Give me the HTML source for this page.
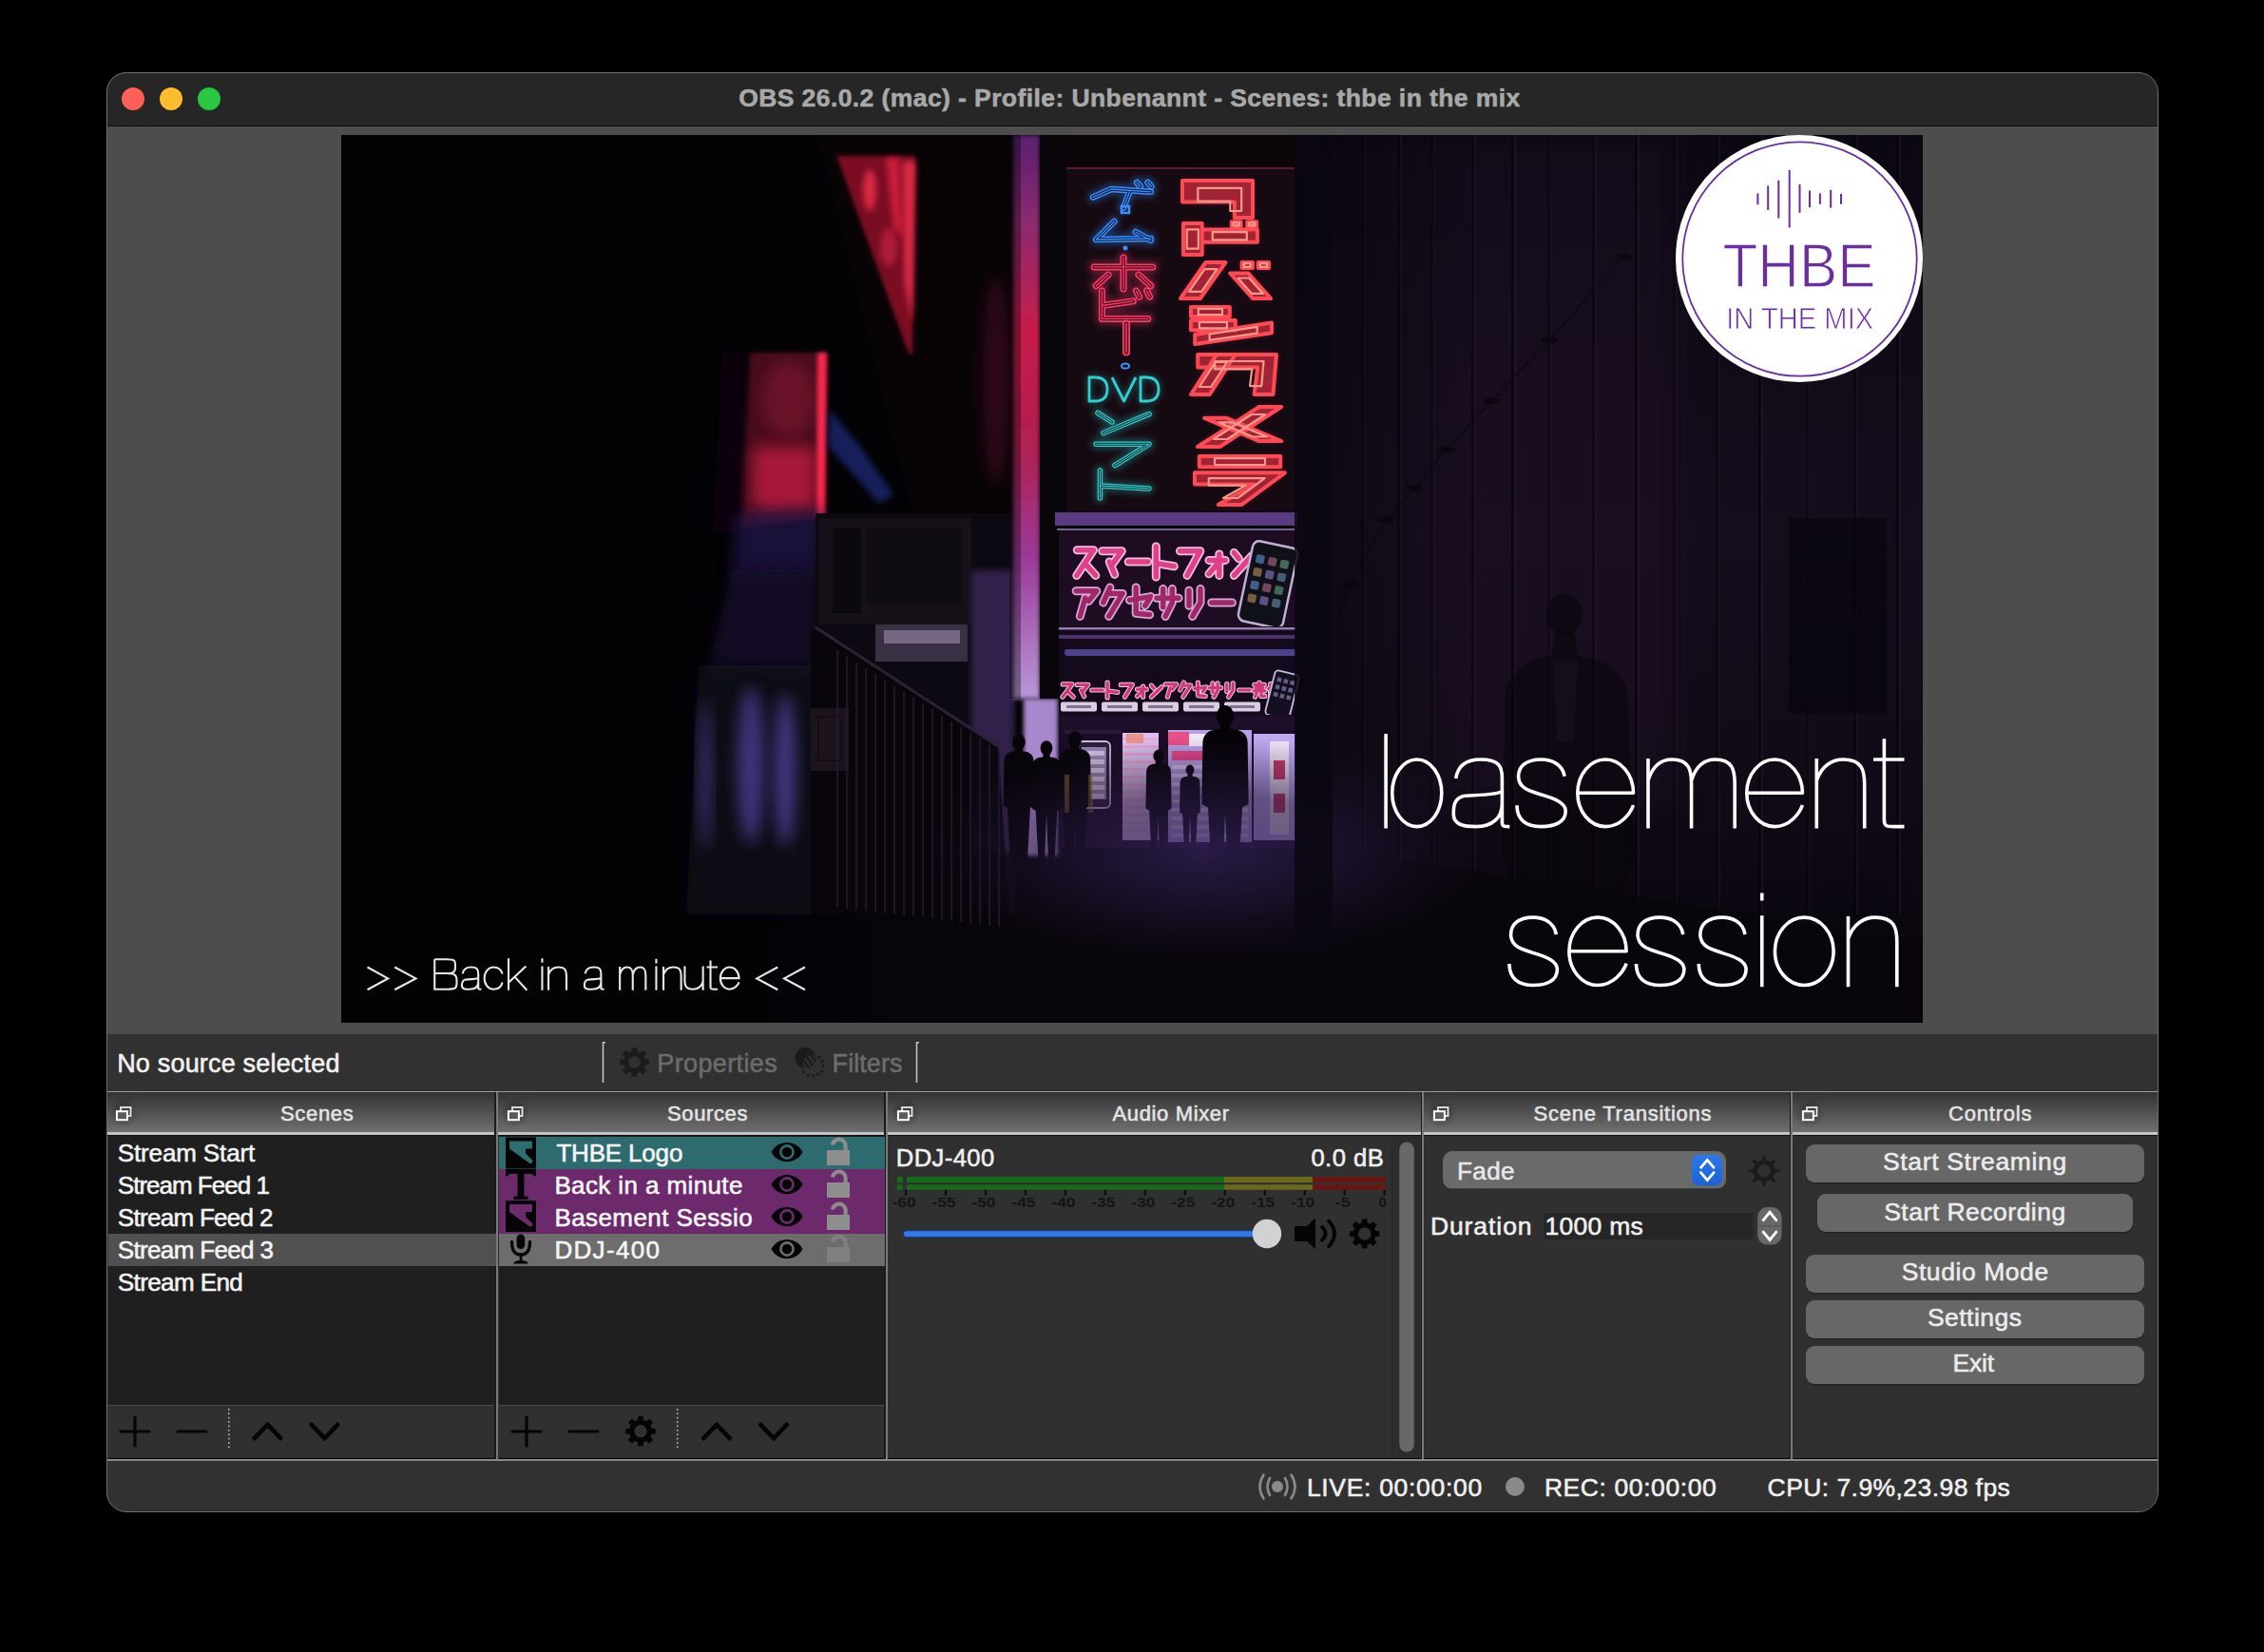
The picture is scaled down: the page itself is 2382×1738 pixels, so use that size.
<!DOCTYPE html><html><head><meta charset="utf-8"><style>
html,body{margin:0;padding:0;background:#000;}
body{width:2382px;height:1738px;overflow:hidden;position:relative;font-family:"Liberation Sans", sans-serif;}
.t{-webkit-text-stroke:0.55px currentColor;z-index:5;}
#win{position:absolute;left:0;top:0;width:2382px;height:1738px;clip-path:inset(76px 112px 148px 112px round 20px);}
</style></head><body><div id="win">
<div style="position:absolute;left:112px;top:76px;width:2158px;height:56px;background:#262626;"></div>
<div style="position:absolute;left:112px;top:132px;width:2158px;height:1px;background:#0c0c0c;"></div>
<div style="position:absolute;left:112px;top:133px;width:2158px;height:955px;background:#4d4d4d;"></div>
<svg style="position:absolute;left:359px;top:142px" width="1664" height="934" viewBox="359 142 1664 934">
<defs>
<filter id="blur2" x="-50%" y="-50%" width="200%" height="200%"><feGaussianBlur stdDeviation="2"/></filter>
<filter id="blur3" x="-50%" y="-50%" width="200%" height="200%"><feGaussianBlur stdDeviation="3"/></filter>
<filter id="blur8" x="-50%" y="-50%" width="200%" height="200%"><feGaussianBlur stdDeviation="8"/></filter>
<filter id="blur20" x="-50%" y="-50%" width="200%" height="200%"><feGaussianBlur stdDeviation="20"/></filter>
<linearGradient id="gRight" x1="0" y1="0" x2="0" y2="1"><stop offset="0" stop-color="#0c0812"/><stop offset="0.45" stop-color="#150d1c"/><stop offset="0.75" stop-color="#100a16"/><stop offset="1" stop-color="#060409"/></linearGradient>
<linearGradient id="gRightH" x1="0" y1="0" x2="1" y2="0"><stop offset="0" stop-color="#000" stop-opacity="0.5"/><stop offset="0.3" stop-color="#000" stop-opacity="0"/><stop offset="1" stop-color="#000" stop-opacity="0"/></linearGradient>
<linearGradient id="gPole" x1="0" y1="0" x2="0" y2="1"><stop offset="0" stop-color="#5a2070"/><stop offset="0.15" stop-color="#8a2a70"/><stop offset="0.35" stop-color="#c81e4a"/><stop offset="0.55" stop-color="#b02050"/><stop offset="0.75" stop-color="#9a3a98"/><stop offset="1" stop-color="#b898d8"/></linearGradient>
<linearGradient id="gRed1" x1="0" y1="0" x2="1" y2="0"><stop offset="0" stop-color="#300810"/><stop offset="0.5" stop-color="#901830"/><stop offset="1" stop-color="#e02848"/></linearGradient>
<linearGradient id="gRed2" x1="0" y1="0" x2="0" y2="1"><stop offset="0" stop-color="#c01c38"/><stop offset="0.45" stop-color="#901838"/><stop offset="0.7" stop-color="#402060"/><stop offset="1" stop-color="#100818"/></linearGradient>
<linearGradient id="gFloor" x1="0" y1="0" x2="0" y2="1"><stop offset="0" stop-color="#2a1a3a"/><stop offset="0.3" stop-color="#140c1a"/><stop offset="1" stop-color="#06040a"/></linearGradient>
<linearGradient id="gPillar" x1="0" y1="0" x2="0" y2="1"><stop offset="0" stop-color="#1a1030"/><stop offset="0.5" stop-color="#4838a0"/><stop offset="0.85" stop-color="#2a2060"/><stop offset="1" stop-color="#0a0814"/></linearGradient>
</defs>
<rect x="359" y="142" width="1664" height="934" fill="#030205"/>
<rect x="1360" y="142" width="663" height="934" fill="url(#gRight)"/>
<rect x="1360" y="142" width="400" height="700" fill="#2a1630" opacity="0.25" filter="url(#blur20)"/>
<rect x="1395" y="142" width="2.5" height="820" fill="#06040a" opacity="0.35"/>
<rect x="1398" y="142" width="2" height="820" fill="#2a1a34" opacity="0.21"/>
<rect x="1432" y="142" width="2.5" height="820" fill="#06040a" opacity="0.55"/>
<rect x="1435" y="142" width="2" height="820" fill="#2a1a34" opacity="0.33"/>
<rect x="1470" y="142" width="2.5" height="820" fill="#06040a" opacity="0.75"/>
<rect x="1473" y="142" width="2" height="820" fill="#2a1a34" opacity="0.45"/>
<rect x="1505" y="142" width="2.5" height="820" fill="#06040a" opacity="0.35"/>
<rect x="1508" y="142" width="2" height="820" fill="#2a1a34" opacity="0.21"/>
<rect x="1548" y="142" width="2.5" height="820" fill="#06040a" opacity="0.55"/>
<rect x="1551" y="142" width="2" height="820" fill="#2a1a34" opacity="0.33"/>
<rect x="1590" y="142" width="2.5" height="820" fill="#06040a" opacity="0.75"/>
<rect x="1593" y="142" width="2" height="820" fill="#2a1a34" opacity="0.45"/>
<rect x="1628" y="142" width="2.5" height="820" fill="#06040a" opacity="0.35"/>
<rect x="1631" y="142" width="2" height="820" fill="#2a1a34" opacity="0.21"/>
<rect x="1675" y="142" width="2.5" height="820" fill="#06040a" opacity="0.55"/>
<rect x="1678" y="142" width="2" height="820" fill="#2a1a34" opacity="0.33"/>
<rect x="1720" y="142" width="2.5" height="820" fill="#06040a" opacity="0.75"/>
<rect x="1723" y="142" width="2" height="820" fill="#2a1a34" opacity="0.45"/>
<rect x="1760" y="142" width="2.5" height="820" fill="#06040a" opacity="0.35"/>
<rect x="1763" y="142" width="2" height="820" fill="#2a1a34" opacity="0.21"/>
<rect x="1805" y="142" width="2.5" height="820" fill="#06040a" opacity="0.55"/>
<rect x="1808" y="142" width="2" height="820" fill="#2a1a34" opacity="0.33"/>
<rect x="1850" y="142" width="2.5" height="820" fill="#06040a" opacity="0.75"/>
<rect x="1853" y="142" width="2" height="820" fill="#2a1a34" opacity="0.45"/>
<rect x="1900" y="142" width="2.5" height="820" fill="#06040a" opacity="0.35"/>
<rect x="1903" y="142" width="2" height="820" fill="#2a1a34" opacity="0.21"/>
<rect x="1950" y="142" width="2.5" height="820" fill="#06040a" opacity="0.55"/>
<rect x="1953" y="142" width="2" height="820" fill="#2a1a34" opacity="0.33"/>
<rect x="1995" y="142" width="2.5" height="820" fill="#06040a" opacity="0.75"/>
<rect x="1998" y="142" width="2" height="820" fill="#2a1a34" opacity="0.45"/>
<rect x="1360" y="142" width="663" height="934" fill="url(#gRightH)"/>
<rect x="1364" y="320" width="14" height="260" fill="#801830" opacity="0.35" filter="url(#blur8)"/>
<polyline points="1405,660 1421,615 1458,547 1488,513 1522,473 1569,422 1630,358 1708,270" fill="none" stroke="#07040a" stroke-width="1.3" opacity="0.5"/>
<ellipse cx="1421" cy="615" rx="9" ry="3.5" fill="#050308" opacity="0.55"/>
<ellipse cx="1458" cy="547" rx="9" ry="3.5" fill="#050308" opacity="0.55"/>
<ellipse cx="1488" cy="513" rx="9" ry="3.5" fill="#050308" opacity="0.55"/>
<ellipse cx="1522" cy="473" rx="9" ry="3.5" fill="#050308" opacity="0.55"/>
<ellipse cx="1569" cy="422" rx="9" ry="3.5" fill="#050308" opacity="0.55"/>
<ellipse cx="1630" cy="358" rx="9" ry="3.5" fill="#050308" opacity="0.55"/>
<ellipse cx="1708" cy="270" rx="9" ry="3.5" fill="#050308" opacity="0.55"/>
<rect x="1882" y="545" width="103" height="205" fill="#05030a" opacity="0.6"/>
<ellipse cx="1646" cy="646" rx="19" ry="22" fill="#050308" opacity="0.5"/>
<path d="M1636,664 L1656,664 L1660,690 Q1700,695 1712,725 L1720,900 L1700,960 L1600,960 L1580,900 L1584,725 Q1596,695 1632,690 Z" fill="#050308" opacity="0.5"/>
<path d="M1634,695 L1660,695 L1656,780 L1638,780 Z" fill="#1e1424" opacity="0.45"/>
<defs><linearGradient id="gFloorH" x1="0" y1="0" x2="1" y2="0"><stop offset="0" stop-color="#08050b" stop-opacity="0"/><stop offset="0.12" stop-color="#08050b" stop-opacity="0.9"/><stop offset="1" stop-color="#08050b" stop-opacity="0.9"/></linearGradient></defs>
<path d="M800,905 L1380,890 L2023,990 L2023,1076 L800,1076 Z" fill="url(#gFloorH)"/>
<path d="M860,142 L1062,142 L1062,540 L960,540 Z" fill="#080406"/>
<path d="M880,164 L963,164 L960,372 L956,372 Z" fill="#7a1024" filter="url(#blur2)"/>
<ellipse cx="915" cy="200" rx="7" ry="22" fill="#f03050" opacity="0.8" filter="url(#blur3)"/>
<ellipse cx="935" cy="260" rx="9" ry="20" fill="#d02848" opacity="0.6" filter="url(#blur3)"/>
<path d="M932,166 L946,166 L950,250 L940,240 Z" fill="#e02040" opacity="0.8" filter="url(#blur3)"/>
<path d="M950,170 L963,170 L960,340 L952,300 Z" fill="#f03050" opacity="0.85" filter="url(#blur3)"/>
<path d="M788,371 L870,371 L868,545 L775,555 L780,470 Z" fill="#4a0a1c" filter="url(#blur2)"/>
<path d="M760,371 L788,371 L780,560 L750,560 Z" fill="#0c0307" filter="url(#blur3)"/>
<rect x="792" y="470" width="66" height="68" rx="8" fill="#d01c44" opacity="0.7" filter="url(#blur8)"/>
<ellipse cx="830" cy="420" rx="28" ry="40" fill="#801430" opacity="0.6" filter="url(#blur8)"/>
<path d="M860,371 L870,371 L868,540 L859,545 Z" fill="#ff2a50" opacity="0.95" filter="url(#blur2)"/>
<path d="M775,540 L866,535 L862,605 L770,610 Z" fill="#24124a" opacity="0.75" filter="url(#blur8)"/>
<path d="M770,600 L862,598 L860,720 L740,725 Z" fill="#180c2a" opacity="0.85" filter="url(#blur8)"/>
<path d="M735,700 L860,700 L858,962 L722,962 Z" fill="#0e0918" filter="url(#blur8)"/>
<ellipse cx="742" cy="815" rx="6" ry="78" fill="#5040a0" opacity="0.7" filter="url(#blur8)"/>
<ellipse cx="790" cy="805" rx="14" ry="82" fill="#5444a8" opacity="0.7" filter="url(#blur8)"/>
<ellipse cx="826" cy="810" rx="11" ry="80" fill="#5c4cb4" opacity="0.7" filter="url(#blur8)"/>
<rect x="858" y="540" width="210" height="422" fill="#0d0912"/>
<rect x="862" y="545" width="160" height="112" fill="#161019"/>
<rect x="876" y="555" width="30" height="90" fill="#0c0810"/>
<rect x="912" y="555" width="100" height="80" fill="#100c14"/>
<rect x="921" y="657" width="97" height="39" fill="#3a3044"/>
<rect x="930" y="663" width="80" height="14" fill="#a898b8" opacity="0.55"/>
<rect x="1022" y="600" width="45" height="297" fill="#3a2658" opacity="0.8" filter="url(#blur3)"/>
<rect x="853" y="745" width="40" height="66" fill="#d898c0"/>
<rect x="861" y="754" width="24" height="46" fill="none" stroke="#c03860" stroke-width="2"/>
<path d="M853,660 L1050,785 L1062,962 L853,962 Z" fill="#08060b" opacity="0.9"/>
<rect x="880" y="684" width="2.2" height="270" fill="#221a2c" opacity="0.8"/>
<rect x="890" y="691" width="2.2" height="265" fill="#221a2c" opacity="0.8"/>
<rect x="900" y="697" width="2.2" height="260" fill="#221a2c" opacity="0.8"/>
<rect x="910" y="703" width="2.2" height="255" fill="#221a2c" opacity="0.8"/>
<rect x="920" y="709" width="2.2" height="250" fill="#221a2c" opacity="0.8"/>
<rect x="930" y="715" width="2.2" height="245" fill="#221a2c" opacity="0.8"/>
<rect x="940" y="722" width="2.2" height="240" fill="#221a2c" opacity="0.8"/>
<rect x="950" y="728" width="2.2" height="235" fill="#221a2c" opacity="0.8"/>
<rect x="960" y="734" width="2.2" height="230" fill="#221a2c" opacity="0.8"/>
<rect x="970" y="740" width="2.2" height="225" fill="#221a2c" opacity="0.8"/>
<rect x="980" y="746" width="2.2" height="220" fill="#221a2c" opacity="0.8"/>
<rect x="990" y="753" width="2.2" height="215" fill="#221a2c" opacity="0.8"/>
<rect x="1000" y="759" width="2.2" height="210" fill="#221a2c" opacity="0.8"/>
<rect x="1010" y="765" width="2.2" height="205" fill="#221a2c" opacity="0.8"/>
<rect x="1020" y="771" width="2.2" height="200" fill="#221a2c" opacity="0.8"/>
<rect x="1030" y="777" width="2.2" height="195" fill="#221a2c" opacity="0.8"/>
<rect x="1040" y="784" width="2.2" height="190" fill="#221a2c" opacity="0.8"/>
<rect x="1050" y="790" width="2.2" height="185" fill="#221a2c" opacity="0.8"/>
<path d="M858,660 L1050,785" stroke="#2a2236" stroke-width="3" fill="none"/>
<path d="M872,430 L905,470 L940,520 L925,530 L872,470 Z" fill="#2838a0" opacity="0.55" filter="url(#blur3)"/>
<ellipse cx="1048" cy="400" rx="14" ry="110" fill="#601030" opacity="0.45" filter="url(#blur8)"/>
<rect x="1066" y="142" width="28" height="593" fill="url(#gPole)" filter="url(#blur2)"/>
<rect x="1062" y="142" width="12" height="593" fill="#000" opacity="0.35"/>
<rect x="1077" y="735" width="36" height="165" fill="#a888cc" filter="url(#blur2)"/>
<rect x="1094" y="142" width="26" height="593" fill="#07040a"/>
<rect x="1120" y="142" width="245" height="400" fill="#0c0508"/>
<rect x="1122" y="176" width="240" height="362" fill="#160a12"/>
<rect x="1122" y="176" width="240" height="2" fill="#5a1a30"/>
<path d="M1244.0,190.0 L1318.0,190.0 L1318.0,229.0 L1298.8,229.0 L1298.8,212.6 L1244.0,212.6 Z" fill="#ff4a55" opacity="0.35" filter="url(#blur3)"/><path d="M1244.0,190.0 L1318.0,190.0 L1318.0,229.0 L1298.8,229.0 L1298.8,212.6 L1244.0,212.6 Z" fill="#a02434" stroke="#ff4a55" stroke-width="4" stroke-linejoin="round"/><path d="M1260.3,197.8 L1306.2,197.8 L1306.2,222.0 L1294.3,222.0 L1294.3,211.8 L1260.3,211.8 Z" fill="none" stroke="#ffa090" stroke-width="2.2" stroke-linejoin="round" opacity="0.95"/>
<path d="M1245.0,235.0 L1264.7,235.0 L1264.7,268.0 L1245.0,268.0 Z M1264.7,241.6 L1322.9,241.6 L1322.9,254.8 L1264.7,254.8 Z M1295.8,233.3 L1305.7,233.3 L1305.7,238.3 L1295.8,238.3 Z M1312.2,233.3 L1322.1,233.3 L1322.1,238.3 L1312.2,238.3 Z" fill="#ff4a55" opacity="0.35" filter="url(#blur3)"/><path d="M1245.0,235.0 L1264.7,235.0 L1264.7,268.0 L1245.0,268.0 Z M1264.7,241.6 L1322.9,241.6 L1322.9,254.8 L1264.7,254.8 Z M1295.8,233.3 L1305.7,233.3 L1305.7,238.3 L1295.8,238.3 Z M1312.2,233.3 L1322.1,233.3 L1322.1,238.3 L1312.2,238.3 Z" fill="#a02434" stroke="#ff4a55" stroke-width="4" stroke-linejoin="round"/><path d="M1248.7,241.3 L1260.9,241.3 L1260.9,261.7 L1248.7,261.7 Z M1275.7,244.1 L1311.8,244.1 L1311.8,252.3 L1275.7,252.3 Z M1297.7,234.3 L1303.8,234.3 L1303.8,237.4 L1297.7,237.4 Z M1314.1,234.3 L1320.2,234.3 L1320.2,237.4 L1314.1,237.4 Z" fill="none" stroke="#ffa090" stroke-width="2.2" stroke-linejoin="round" opacity="0.95"/>
<path d="M1268.6,276.0 L1289.5,276.0 L1262.9,314.0 L1242.0,314.0 Z M1294.2,287.4 L1313.2,287.4 L1337.0,314.0 L1318.0,314.0 Z M1306.6,276.0 L1318.0,276.0 L1318.0,282.1 L1306.6,282.1 Z M1323.7,276.0 L1335.1,276.0 L1335.1,282.1 L1323.7,282.1 Z" fill="#ff4a55" opacity="0.35" filter="url(#blur3)"/><path d="M1268.6,276.0 L1289.5,276.0 L1262.9,314.0 L1242.0,314.0 Z M1294.2,287.4 L1313.2,287.4 L1337.0,314.0 L1318.0,314.0 Z M1306.6,276.0 L1318.0,276.0 L1318.0,282.1 L1306.6,282.1 Z M1323.7,276.0 L1335.1,276.0 L1335.1,282.1 L1323.7,282.1 Z" fill="#a02434" stroke="#ff4a55" stroke-width="4" stroke-linejoin="round"/><path d="M1267.5,283.2 L1280.5,283.2 L1264.0,306.8 L1251.0,306.8 Z M1302.4,292.5 L1314.2,292.5 L1328.9,308.9 L1317.1,308.9 Z M1308.8,277.2 L1315.8,277.2 L1315.8,280.9 L1308.8,280.9 Z M1325.9,277.2 L1332.9,277.2 L1332.9,280.9 L1325.9,280.9 Z" fill="none" stroke="#ffa090" stroke-width="2.2" stroke-linejoin="round" opacity="0.95"/>
<path d="M1253.0,323.0 L1293.8,323.0 L1293.8,333.1 L1253.0,333.1 Z M1253.0,337.0 L1299.8,337.0 L1299.8,347.2 L1253.0,347.2 Z M1257.2,351.9 L1338.0,339.4 L1338.0,350.3 L1257.2,362.0 Z" fill="#ff4a55" opacity="0.35" filter="url(#blur3)"/><path d="M1253.0,323.0 L1293.8,323.0 L1293.8,333.1 L1253.0,333.1 Z M1253.0,337.0 L1299.8,337.0 L1299.8,347.2 L1253.0,347.2 Z M1257.2,351.9 L1338.0,339.4 L1338.0,350.3 L1257.2,362.0 Z" fill="#a02434" stroke="#ff4a55" stroke-width="4" stroke-linejoin="round"/><path d="M1260.8,324.9 L1286.0,324.9 L1286.0,331.2 L1260.8,331.2 Z M1261.9,339.0 L1290.9,339.0 L1290.9,345.3 L1261.9,345.3 Z M1272.6,351.5 L1322.7,343.8 L1322.7,350.5 L1272.6,357.8 Z" fill="none" stroke="#ffa090" stroke-width="2.2" stroke-linejoin="round" opacity="0.95"/>
<path d="M1260.2,373.0 L1343.0,373.0 L1339.4,415.0 L1319.6,415.0 L1323.2,386.4 L1260.2,386.4 Z M1280.0,373.0 L1299.8,373.0 L1272.8,415.0 L1253.0,415.0 Z" fill="#ff4a55" opacity="0.35" filter="url(#blur3)"/><path d="M1260.2,373.0 L1343.0,373.0 L1339.4,415.0 L1319.6,415.0 L1323.2,386.4 L1260.2,386.4 Z M1280.0,373.0 L1299.8,373.0 L1272.8,415.0 L1253.0,415.0 Z" fill="#a02434" stroke="#ff4a55" stroke-width="4" stroke-linejoin="round"/><path d="M1278.2,380.0 L1329.5,380.0 L1327.3,406.1 L1315.0,406.1 L1317.3,388.4 L1278.2,388.4 Z M1278.6,381.0 L1290.9,381.0 L1274.2,407.0 L1261.9,407.0 Z" fill="none" stroke="#ffa090" stroke-width="2.2" stroke-linejoin="round" opacity="0.95"/>
<path d="M1324.8,428.0 L1348.2,428.0 L1283.4,470.0 L1260.0,470.0 Z M1267.2,439.8 L1290.6,439.8 L1348.2,464.1 L1324.8,464.1 Z" fill="#ff4a55" opacity="0.35" filter="url(#blur3)"/><path d="M1324.8,428.0 L1348.2,428.0 L1283.4,470.0 L1260.0,470.0 Z M1267.2,439.8 L1290.6,439.8 L1348.2,464.1 L1324.8,464.1 Z" fill="#a02434" stroke="#ff4a55" stroke-width="4" stroke-linejoin="round"/><path d="M1316.9,436.0 L1331.4,436.0 L1291.3,462.0 L1276.8,462.0 Z M1282.6,444.4 L1297.1,444.4 L1332.8,459.5 L1318.3,459.5 Z" fill="none" stroke="#ffa090" stroke-width="2.2" stroke-linejoin="round" opacity="0.95"/>
<path d="M1261.8,480.0 L1347.2,480.0 L1347.2,491.2 L1261.8,491.2 Z M1257.0,497.3 L1352.0,497.3 L1306.4,531.0 L1281.7,531.0 L1319.7,509.6 L1257.0,509.6 Z" fill="#ff4a55" opacity="0.35" filter="url(#blur3)"/><path d="M1261.8,480.0 L1347.2,480.0 L1347.2,491.2 L1261.8,491.2 Z M1257.0,497.3 L1352.0,497.3 L1306.4,531.0 L1281.7,531.0 L1319.7,509.6 L1257.0,509.6 Z" fill="#a02434" stroke="#ff4a55" stroke-width="4" stroke-linejoin="round"/><path d="M1278.0,482.1 L1331.0,482.1 L1331.0,489.1 L1278.0,489.1 Z M1271.7,503.2 L1330.6,503.2 L1302.3,524.0 L1287.0,524.0 L1310.6,510.7 L1271.7,510.7 Z" fill="none" stroke="#ffa090" stroke-width="2.2" stroke-linejoin="round" opacity="0.95"/>
<path d="M1150.0,207.4 L1169.2,199.0 L1210.8,201.8 M1188.4,201.8 L1182.0,218.6 M1196.1,192.0 L1199.9,196.2 M1207.6,192.0 L1211.4,196.2" fill="none" stroke="#3890ff" stroke-width="13.0" stroke-linecap="round" stroke-linejoin="round" opacity="0.3" filter="url(#blur3)"/><path d="M1150.0,207.4 L1169.2,199.0 L1210.8,201.8 M1188.4,201.8 L1182.0,218.6 M1196.1,192.0 L1199.9,196.2 M1207.6,192.0 L1211.4,196.2" fill="none" stroke="#3890ff" stroke-width="6.5" stroke-linecap="round" stroke-linejoin="round" /><path d="M1150.0,207.4 L1169.2,199.0 L1210.8,201.8 M1188.4,201.8 L1182.0,218.6 M1196.1,192.0 L1199.9,196.2 M1207.6,192.0 L1211.4,196.2" fill="none" stroke="#0a1a40" stroke-width="3.575" stroke-linecap="round" stroke-linejoin="round" /><path d="M1150.0,207.4 L1169.2,199.0 L1210.8,201.8 M1188.4,201.8 L1182.0,218.6 M1196.1,192.0 L1199.9,196.2 M1207.6,192.0 L1211.4,196.2" fill="none" stroke="#3890ff" stroke-width="1.3" stroke-linecap="round" stroke-linejoin="round" />
<rect x="1180" y="217" width="8" height="7" fill="none" stroke="#3890ff" stroke-width="2.5"/>
<path d="M1172.4,233.0 L1153.2,252.0 L1210.8,251.0 M1194.8,244.0 L1210.8,253.0" fill="none" stroke="#3890ff" stroke-width="13.0" stroke-linecap="round" stroke-linejoin="round" opacity="0.3" filter="url(#blur3)"/><path d="M1172.4,233.0 L1153.2,252.0 L1210.8,251.0 M1194.8,244.0 L1210.8,253.0" fill="none" stroke="#3890ff" stroke-width="6.5" stroke-linecap="round" stroke-linejoin="round" /><path d="M1172.4,233.0 L1153.2,252.0 L1210.8,251.0 M1194.8,244.0 L1210.8,253.0" fill="none" stroke="#0a1a40" stroke-width="3.575" stroke-linecap="round" stroke-linejoin="round" /><path d="M1172.4,233.0 L1153.2,252.0 L1210.8,251.0 M1194.8,244.0 L1210.8,253.0" fill="none" stroke="#3890ff" stroke-width="1.3" stroke-linecap="round" stroke-linejoin="round" />
<circle cx="1184" cy="261" r="2.5" fill="#3890ff"/>
<path d="M1151.3,280.9 L1212.7,280.9 M1182.0,271.0 L1182.0,304.0 M1166.0,289.1 L1153.2,300.7 M1198.0,289.1 L1210.8,300.7" fill="none" stroke="#ff3a6a" stroke-width="14.0" stroke-linecap="round" stroke-linejoin="round" opacity="0.3" filter="url(#blur3)"/><path d="M1151.3,280.9 L1212.7,280.9 M1182.0,271.0 L1182.0,304.0 M1166.0,289.1 L1153.2,300.7 M1198.0,289.1 L1210.8,300.7" fill="none" stroke="#ff3a6a" stroke-width="7" stroke-linecap="round" stroke-linejoin="round" /><path d="M1151.3,280.9 L1212.7,280.9 M1182.0,271.0 L1182.0,304.0 M1166.0,289.1 L1153.2,300.7 M1198.0,289.1 L1210.8,300.7" fill="none" stroke="#400a18" stroke-width="3.8500000000000005" stroke-linecap="round" stroke-linejoin="round" /><path d="M1151.3,280.9 L1212.7,280.9 M1182.0,271.0 L1182.0,304.0 M1166.0,289.1 L1153.2,300.7 M1198.0,289.1 L1210.8,300.7" fill="none" stroke="#ff3a6a" stroke-width="1.4000000000000001" stroke-linecap="round" stroke-linejoin="round" />
<path d="M1159.4,306.0 L1159.4,335.4 L1207.8,335.4 M1159.4,321.5 L1192.3,316.9 M1195.4,306.0 L1198.5,312.2 M1206.6,306.0 L1209.7,312.2" fill="none" stroke="#ff3a6a" stroke-width="14.0" stroke-linecap="round" stroke-linejoin="round" opacity="0.3" filter="url(#blur3)"/><path d="M1159.4,306.0 L1159.4,335.4 L1207.8,335.4 M1159.4,321.5 L1192.3,316.9 M1195.4,306.0 L1198.5,312.2 M1206.6,306.0 L1209.7,312.2" fill="none" stroke="#ff3a6a" stroke-width="7" stroke-linecap="round" stroke-linejoin="round" /><path d="M1159.4,306.0 L1159.4,335.4 L1207.8,335.4 M1159.4,321.5 L1192.3,316.9 M1195.4,306.0 L1198.5,312.2 M1206.6,306.0 L1209.7,312.2" fill="none" stroke="#400a18" stroke-width="3.8500000000000005" stroke-linecap="round" stroke-linejoin="round" /><path d="M1159.4,306.0 L1159.4,335.4 L1207.8,335.4 M1159.4,321.5 L1192.3,316.9 M1195.4,306.0 L1198.5,312.2 M1206.6,306.0 L1209.7,312.2" fill="none" stroke="#ff3a6a" stroke-width="1.4000000000000001" stroke-linecap="round" stroke-linejoin="round" />
<path d="M1185.0,340.6 L1185.0,370.4" fill="none" stroke="#ff3a6a" stroke-width="16.0" stroke-linecap="round" stroke-linejoin="round" opacity="0.3" filter="url(#blur3)"/><path d="M1185.0,340.6 L1185.0,370.4" fill="none" stroke="#ff3a6a" stroke-width="8" stroke-linecap="round" stroke-linejoin="round" /><path d="M1185.0,340.6 L1185.0,370.4" fill="none" stroke="#400a18" stroke-width="4.4" stroke-linecap="round" stroke-linejoin="round" /><path d="M1185.0,340.6 L1185.0,370.4" fill="none" stroke="#ff3a6a" stroke-width="1.6" stroke-linecap="round" stroke-linejoin="round" />
<ellipse cx="1184" cy="385" rx="4" ry="2.5" fill="none" stroke="#3890ff" stroke-width="2"/>
<path d="M1146,397 L1146,422 L1152,422 Q1165,422 1165,409.5 Q1165,397 1152,397 Z M1170,397 L1182.5,422 L1195,397 M1200,397 L1200,422 L1206,422 Q1219,422 1219,409.5 Q1219,397 1206,397 Z" fill="none" stroke="#30d0d0" stroke-width="5.5" opacity="0.3" filter="url(#blur3)"/>
<path d="M1146,397 L1146,422 L1152,422 Q1165,422 1165,409.5 Q1165,397 1152,397 Z M1170,397 L1182.5,422 L1195,397 M1200,397 L1200,422 L1206,422 Q1219,422 1219,409.5 Q1219,397 1206,397 Z" fill="none" stroke="#30d0d0" stroke-width="2.8" stroke-linejoin="round"/>
<path d="M1155.0,434.4 L1170.0,444.0 M1161.0,455.5 L1209.0,435.6" fill="none" stroke="#30d0d0" stroke-width="11.0" stroke-linecap="round" stroke-linejoin="round" opacity="0.3" filter="url(#blur3)"/><path d="M1155.0,434.4 L1170.0,444.0 M1161.0,455.5 L1209.0,435.6" fill="none" stroke="#30d0d0" stroke-width="5.5" stroke-linecap="round" stroke-linejoin="round" /><path d="M1155.0,434.4 L1170.0,444.0 M1161.0,455.5 L1209.0,435.6" fill="none" stroke="#062828" stroke-width="3.0250000000000004" stroke-linecap="round" stroke-linejoin="round" /><path d="M1155.0,434.4 L1170.0,444.0 M1161.0,455.5 L1209.0,435.6" fill="none" stroke="#30d0d0" stroke-width="1.1" stroke-linecap="round" stroke-linejoin="round" />
<path d="M1153.2,467.2 L1209.0,467.2 L1173.0,489.6" fill="none" stroke="#30d0d0" stroke-width="11.0" stroke-linecap="round" stroke-linejoin="round" opacity="0.3" filter="url(#blur3)"/><path d="M1153.2,467.2 L1209.0,467.2 L1173.0,489.6" fill="none" stroke="#30d0d0" stroke-width="5.5" stroke-linecap="round" stroke-linejoin="round" /><path d="M1153.2,467.2 L1209.0,467.2 L1173.0,489.6" fill="none" stroke="#062828" stroke-width="3.0250000000000004" stroke-linecap="round" stroke-linejoin="round" /><path d="M1153.2,467.2 L1209.0,467.2 L1173.0,489.6" fill="none" stroke="#30d0d0" stroke-width="1.1" stroke-linecap="round" stroke-linejoin="round" />
<path d="M1157.4,495.0 L1157.4,524.0 M1157.4,510.9 L1208.9,513.9" fill="none" stroke="#30d0d0" stroke-width="11.0" stroke-linecap="round" stroke-linejoin="round" opacity="0.3" filter="url(#blur3)"/><path d="M1157.4,495.0 L1157.4,524.0 M1157.4,510.9 L1208.9,513.9" fill="none" stroke="#30d0d0" stroke-width="5.5" stroke-linecap="round" stroke-linejoin="round" /><path d="M1157.4,495.0 L1157.4,524.0 M1157.4,510.9 L1208.9,513.9" fill="none" stroke="#062828" stroke-width="3.0250000000000004" stroke-linecap="round" stroke-linejoin="round" /><path d="M1157.4,495.0 L1157.4,524.0 M1157.4,510.9 L1208.9,513.9" fill="none" stroke="#30d0d0" stroke-width="1.1" stroke-linecap="round" stroke-linejoin="round" />
<rect x="1110" y="539" width="255" height="14" fill="#5a3a80"/>
<rect x="1112" y="556" width="250" height="2" fill="#a090c0" opacity="0.7"/>
<rect x="1114" y="558" width="249" height="101" fill="#1e0c22"/>
<path d="M1133.3,578.8 L1150.5,578.8 L1132.8,605.4 M1141.3,592.6 L1152.8,605.4" fill="none" stroke="#f4c0e0" stroke-width="9" stroke-linecap="round" stroke-linejoin="round" />
<path d="M1133.3,578.8 L1150.5,578.8 L1132.8,605.4 M1141.3,592.6 L1152.8,605.4" fill="none" stroke="#e0408a" stroke-width="5.5" stroke-linecap="round" stroke-linejoin="round" />
<path d="M1159.7,579.8 L1180.3,579.8 L1170.0,594.2 M1167.2,591.0 L1172.8,604.4" fill="none" stroke="#f4c0e0" stroke-width="9" stroke-linecap="round" stroke-linejoin="round" />
<path d="M1159.7,579.8 L1180.3,579.8 L1170.0,594.2 M1167.2,591.0 L1172.8,604.4" fill="none" stroke="#e0408a" stroke-width="5.5" stroke-linecap="round" stroke-linejoin="round" />
<path d="M1187.2,591.0 L1207.8,591.0" fill="none" stroke="#f4c0e0" stroke-width="9" stroke-linecap="round" stroke-linejoin="round" />
<path d="M1187.2,591.0 L1207.8,591.0" fill="none" stroke="#e0408a" stroke-width="5.5" stroke-linecap="round" stroke-linejoin="round" />
<path d="M1216.3,575.0 L1216.3,607.0 M1216.3,592.6 L1235.3,595.8" fill="none" stroke="#f4c0e0" stroke-width="9" stroke-linecap="round" stroke-linejoin="round" />
<path d="M1216.3,575.0 L1216.3,607.0 M1216.3,592.6 L1235.3,595.8" fill="none" stroke="#e0408a" stroke-width="5.5" stroke-linecap="round" stroke-linejoin="round" />
<path d="M1241.5,579.8 L1262.8,579.8 L1249.0,605.4" fill="none" stroke="#f4c0e0" stroke-width="9" stroke-linecap="round" stroke-linejoin="round" />
<path d="M1241.5,579.8 L1262.8,579.8 L1249.0,605.4" fill="none" stroke="#e0408a" stroke-width="5.5" stroke-linecap="round" stroke-linejoin="round" />
<path d="M1272.0,589.4 L1289.2,589.4 M1282.8,583.0 L1282.8,605.4 M1282.8,591.0 L1272.0,603.8" fill="none" stroke="#f4c0e0" stroke-width="9" stroke-linecap="round" stroke-linejoin="round" />
<path d="M1272.0,589.4 L1289.2,589.4 M1282.8,583.0 L1282.8,605.4 M1282.8,591.0 L1272.0,603.8" fill="none" stroke="#e0408a" stroke-width="5.5" stroke-linecap="round" stroke-linejoin="round" />
<path d="M1298.3,581.4 L1303.4,587.8 M1298.3,605.4 L1317.2,584.6" fill="none" stroke="#f4c0e0" stroke-width="9" stroke-linecap="round" stroke-linejoin="round" />
<path d="M1298.3,581.4 L1303.4,587.8 M1298.3,605.4 L1317.2,584.6" fill="none" stroke="#e0408a" stroke-width="5.5" stroke-linecap="round" stroke-linejoin="round" />
<path d="M1132.2,621.8 L1153.8,621.8 L1145.4,632.4 M1141.8,629.2 L1136.3,648.4" fill="none" stroke="#d8a8d8" stroke-width="9" stroke-linecap="round" stroke-linejoin="round" />
<path d="M1132.2,621.8 L1153.8,621.8 L1145.4,632.4 M1141.8,629.2 L1136.3,648.4" fill="none" stroke="#a02868" stroke-width="5.5" stroke-linecap="round" stroke-linejoin="round" />
<path d="M1167.9,618.0 L1160.7,634.0 M1165.5,624.4 L1181.1,624.4 L1166.7,648.4" fill="none" stroke="#d8a8d8" stroke-width="9" stroke-linecap="round" stroke-linejoin="round" />
<path d="M1167.9,618.0 L1160.7,634.0 M1165.5,624.4 L1181.1,624.4 L1166.7,648.4" fill="none" stroke="#a02868" stroke-width="5.5" stroke-linecap="round" stroke-linejoin="round" />
<path d="M1188.5,631.4 L1210.8,627.6 L1204.8,637.2 M1195.2,618.0 L1195.2,645.2 L1209.6,646.8" fill="none" stroke="#d8a8d8" stroke-width="9" stroke-linecap="round" stroke-linejoin="round" />
<path d="M1188.5,631.4 L1210.8,627.6 L1204.8,637.2 M1195.2,618.0 L1195.2,645.2 L1209.6,646.8" fill="none" stroke="#a02868" stroke-width="5.5" stroke-linecap="round" stroke-linejoin="round" />
<path d="M1217.0,629.2 L1240.0,629.2 M1223.7,619.6 L1223.7,638.8 M1233.3,619.6 L1233.3,634.0 L1226.1,648.4" fill="none" stroke="#d8a8d8" stroke-width="9" stroke-linecap="round" stroke-linejoin="round" />
<path d="M1217.0,629.2 L1240.0,629.2 M1223.7,619.6 L1223.7,638.8 M1233.3,619.6 L1233.3,634.0 L1226.1,648.4" fill="none" stroke="#a02868" stroke-width="5.5" stroke-linecap="round" stroke-linejoin="round" />
<path d="M1251.0,621.2 L1251.0,637.2 M1263.0,619.6 L1263.0,634.0 L1254.6,648.4" fill="none" stroke="#d8a8d8" stroke-width="9" stroke-linecap="round" stroke-linejoin="round" />
<path d="M1251.0,621.2 L1251.0,637.2 M1263.0,619.6 L1263.0,634.0 L1254.6,648.4" fill="none" stroke="#a02868" stroke-width="5.5" stroke-linecap="round" stroke-linejoin="round" />
<path d="M1274.7,634.0 L1296.3,634.0" fill="none" stroke="#d8a8d8" stroke-width="9" stroke-linecap="round" stroke-linejoin="round" />
<path d="M1274.7,634.0 L1296.3,634.0" fill="none" stroke="#a02868" stroke-width="5.5" stroke-linecap="round" stroke-linejoin="round" />
<g transform="rotate(12 1334 615)"><rect x="1310" y="572" width="48" height="86" rx="7" fill="#101018" stroke="#c0b0d8" stroke-width="2.5"/>
<rect x="1316" y="586" width="9" height="9" rx="2" fill="#5070a8" opacity="0.8"/>
<rect x="1329" y="586" width="9" height="9" rx="2" fill="#905070" opacity="0.8"/>
<rect x="1342" y="586" width="9" height="9" rx="2" fill="#508070" opacity="0.8"/>
<rect x="1316" y="600" width="9" height="9" rx="2" fill="#907050" opacity="0.8"/>
<rect x="1329" y="600" width="9" height="9" rx="2" fill="#7060a0" opacity="0.8"/>
<rect x="1342" y="600" width="9" height="9" rx="2" fill="#507090" opacity="0.8"/>
<rect x="1316" y="614" width="9" height="9" rx="2" fill="#5070a8" opacity="0.8"/>
<rect x="1329" y="614" width="9" height="9" rx="2" fill="#905070" opacity="0.8"/>
<rect x="1342" y="614" width="9" height="9" rx="2" fill="#508070" opacity="0.8"/>
<rect x="1316" y="628" width="9" height="9" rx="2" fill="#907050" opacity="0.8"/>
<rect x="1329" y="628" width="9" height="9" rx="2" fill="#7060a0" opacity="0.8"/>
<rect x="1342" y="628" width="9" height="9" rx="2" fill="#507090" opacity="0.8"/>
</g>
<rect x="1114" y="659" width="250" height="100" fill="#140a1c"/>
<rect x="1114" y="660" width="250" height="2.5" fill="#b898d8" opacity="0.8"/>
<rect x="1114" y="668" width="250" height="4" fill="#4a3068"/>
<rect x="1120" y="683" width="244" height="7" rx="3" fill="#5850a8" opacity="0.8"/>
<path d="M1118.3,719.9 L1128.0,719.9 L1118.0,733.2 M1122.8,726.8 L1129.3,733.2" fill="none" stroke="#f0c8e0" stroke-width="5.2" stroke-linecap="round" stroke-linejoin="round" />
<path d="M1118.3,719.9 L1128.0,719.9 L1118.0,733.2 M1122.8,726.8 L1129.3,733.2" fill="none" stroke="#d03878" stroke-width="3.2" stroke-linecap="round" stroke-linejoin="round" />
<path d="M1133.2,720.4 L1144.8,720.4 L1139.0,727.6 M1137.4,726.0 L1140.6,732.7" fill="none" stroke="#f0c8e0" stroke-width="5.2" stroke-linecap="round" stroke-linejoin="round" />
<path d="M1133.2,720.4 L1144.8,720.4 L1139.0,727.6 M1137.4,726.0 L1140.6,732.7" fill="none" stroke="#d03878" stroke-width="3.2" stroke-linecap="round" stroke-linejoin="round" />
<path d="M1148.7,726.0 L1160.3,726.0" fill="none" stroke="#f0c8e0" stroke-width="5.2" stroke-linecap="round" stroke-linejoin="round" />
<path d="M1148.7,726.0 L1160.3,726.0" fill="none" stroke="#d03878" stroke-width="3.2" stroke-linecap="round" stroke-linejoin="round" />
<path d="M1165.1,718.0 L1165.1,734.0 M1165.1,726.8 L1175.8,728.4" fill="none" stroke="#f0c8e0" stroke-width="5.2" stroke-linecap="round" stroke-linejoin="round" />
<path d="M1165.1,718.0 L1165.1,734.0 M1165.1,726.8 L1175.8,728.4" fill="none" stroke="#d03878" stroke-width="3.2" stroke-linecap="round" stroke-linejoin="round" />
<path d="M1179.3,720.4 L1191.3,720.4 L1183.5,733.2" fill="none" stroke="#f0c8e0" stroke-width="5.2" stroke-linecap="round" stroke-linejoin="round" />
<path d="M1179.3,720.4 L1191.3,720.4 L1183.5,733.2" fill="none" stroke="#d03878" stroke-width="3.2" stroke-linecap="round" stroke-linejoin="round" />
<path d="M1196.5,725.2 L1206.2,725.2 M1202.6,722.0 L1202.6,733.2 M1202.6,726.0 L1196.5,732.4" fill="none" stroke="#f0c8e0" stroke-width="5.2" stroke-linecap="round" stroke-linejoin="round" />
<path d="M1196.5,725.2 L1206.2,725.2 M1202.6,722.0 L1202.6,733.2 M1202.6,726.0 L1196.5,732.4" fill="none" stroke="#d03878" stroke-width="3.2" stroke-linecap="round" stroke-linejoin="round" />
<path d="M1211.3,721.2 L1214.2,724.4 M1211.3,733.2 L1222.0,722.8" fill="none" stroke="#f0c8e0" stroke-width="5.2" stroke-linecap="round" stroke-linejoin="round" />
<path d="M1211.3,721.2 L1214.2,724.4 M1211.3,733.2 L1222.0,722.8" fill="none" stroke="#d03878" stroke-width="3.2" stroke-linecap="round" stroke-linejoin="round" />
<path d="M1226.2,719.9 L1237.8,719.9 L1233.3,725.2 M1231.3,723.6 L1228.4,733.2" fill="none" stroke="#f0c8e0" stroke-width="5.2" stroke-linecap="round" stroke-linejoin="round" />
<path d="M1226.2,719.9 L1237.8,719.9 L1233.3,725.2 M1231.3,723.6 L1228.4,733.2" fill="none" stroke="#d03878" stroke-width="3.2" stroke-linecap="round" stroke-linejoin="round" />
<path d="M1245.5,718.0 L1241.7,726.0 M1244.2,721.2 L1252.7,721.2 L1244.9,733.2" fill="none" stroke="#f0c8e0" stroke-width="5.2" stroke-linecap="round" stroke-linejoin="round" />
<path d="M1245.5,718.0 L1241.7,726.0 M1244.2,721.2 L1252.7,721.2 L1244.9,733.2" fill="none" stroke="#d03878" stroke-width="3.2" stroke-linecap="round" stroke-linejoin="round" />
<path d="M1256.8,724.7 L1268.8,722.8 L1265.6,727.6 M1260.4,718.0 L1260.4,731.6 L1268.2,732.4" fill="none" stroke="#f0c8e0" stroke-width="5.2" stroke-linecap="round" stroke-linejoin="round" />
<path d="M1256.8,724.7 L1268.8,722.8 L1265.6,727.6 M1260.4,718.0 L1260.4,731.6 L1268.2,732.4" fill="none" stroke="#d03878" stroke-width="3.2" stroke-linecap="round" stroke-linejoin="round" />
<path d="M1272.3,723.6 L1284.7,723.6 M1275.9,718.8 L1275.9,728.4 M1281.1,718.8 L1281.1,726.0 L1277.2,733.2" fill="none" stroke="#f0c8e0" stroke-width="5.2" stroke-linecap="round" stroke-linejoin="round" />
<path d="M1272.3,723.6 L1284.7,723.6 M1275.9,718.8 L1275.9,728.4 M1281.1,718.8 L1281.1,726.0 L1277.2,733.2" fill="none" stroke="#d03878" stroke-width="3.2" stroke-linecap="round" stroke-linejoin="round" />
<path d="M1290.8,719.6 L1290.8,727.6 M1297.2,718.8 L1297.2,726.0 L1292.7,733.2" fill="none" stroke="#f0c8e0" stroke-width="5.2" stroke-linecap="round" stroke-linejoin="round" />
<path d="M1290.8,719.6 L1290.8,727.6 M1297.2,718.8 L1297.2,726.0 L1292.7,733.2" fill="none" stroke="#d03878" stroke-width="3.2" stroke-linecap="round" stroke-linejoin="round" />
<path d="M1303.7,726.0 L1315.3,726.0" fill="none" stroke="#f0c8e0" stroke-width="5.2" stroke-linecap="round" stroke-linejoin="round" />
<path d="M1303.7,726.0 L1315.3,726.0" fill="none" stroke="#d03878" stroke-width="3.2" stroke-linecap="round" stroke-linejoin="round" />
<path d="M1319.8,720.4 L1330.2,720.4 M1325.0,718.0 L1325.0,723.6 M1321.1,723.6 L1328.9,723.6 M1319.2,726.8 L1330.8,726.8 M1323.0,726.8 L1320.5,733.2 M1327.0,726.8 L1327.0,732.4 L1330.8,732.4" fill="none" stroke="#f0c8e0" stroke-width="5.2" stroke-linecap="round" stroke-linejoin="round" />
<path d="M1319.8,720.4 L1330.2,720.4 M1325.0,718.0 L1325.0,723.6 M1321.1,723.6 L1328.9,723.6 M1319.2,726.8 L1330.8,726.8 M1323.0,726.8 L1320.5,733.2 M1327.0,726.8 L1327.0,732.4 L1330.8,732.4" fill="none" stroke="#d03878" stroke-width="3.2" stroke-linecap="round" stroke-linejoin="round" />
<path d="M1334.7,724.4 L1338.5,724.4 M1336.6,719.6 L1336.6,732.4 M1339.8,718.8 L1346.3,718.8 L1346.3,724.4 L1339.8,724.4 L1339.8,718.8 M1339.2,727.6 L1346.3,727.6 L1344.4,733.2 M1341.8,728.4 L1339.8,733.2" fill="none" stroke="#f0c8e0" stroke-width="5.2" stroke-linecap="round" stroke-linejoin="round" />
<path d="M1334.7,724.4 L1338.5,724.4 M1336.6,719.6 L1336.6,732.4 M1339.8,718.8 L1346.3,718.8 L1346.3,724.4 L1339.8,724.4 L1339.8,718.8 M1339.2,727.6 L1346.3,727.6 L1344.4,733.2 M1341.8,728.4 L1339.8,733.2" fill="none" stroke="#d03878" stroke-width="3.2" stroke-linecap="round" stroke-linejoin="round" />
<rect x="1116" y="738.5" width="38" height="10" rx="2" fill="#ece0f4" opacity="0.92"/>
<rect x="1122" y="742" width="26" height="3" fill="#5a4a6a" opacity="0.7"/>
<rect x="1159" y="738.5" width="38" height="10" rx="2" fill="#ece0f4" opacity="0.92"/>
<rect x="1165" y="742" width="26" height="3" fill="#5a4a6a" opacity="0.7"/>
<rect x="1202" y="738.5" width="38" height="10" rx="2" fill="#ece0f4" opacity="0.92"/>
<rect x="1208" y="742" width="26" height="3" fill="#5a4a6a" opacity="0.7"/>
<rect x="1245" y="738.5" width="38" height="10" rx="2" fill="#ece0f4" opacity="0.92"/>
<rect x="1251" y="742" width="26" height="3" fill="#5a4a6a" opacity="0.7"/>
<rect x="1288" y="738.5" width="38" height="10" rx="2" fill="#ece0f4" opacity="0.92"/>
<rect x="1294" y="742" width="26" height="3" fill="#5a4a6a" opacity="0.7"/>
<g transform="rotate(14 1349 731)"><rect x="1336" y="707" width="26" height="48" rx="4" fill="#141020" stroke="#c8b8e0" stroke-width="1.8"/>
<rect x="1340" y="714" width="4.5" height="4.5" fill="#8a80b0" opacity="0.7"/>
<rect x="1347" y="714" width="4.5" height="4.5" fill="#8a80b0" opacity="0.7"/>
<rect x="1354" y="714" width="4.5" height="4.5" fill="#8a80b0" opacity="0.7"/>
<rect x="1340" y="722" width="4.5" height="4.5" fill="#8a80b0" opacity="0.7"/>
<rect x="1347" y="722" width="4.5" height="4.5" fill="#8a80b0" opacity="0.7"/>
<rect x="1354" y="722" width="4.5" height="4.5" fill="#8a80b0" opacity="0.7"/>
<rect x="1340" y="730" width="4.5" height="4.5" fill="#8a80b0" opacity="0.7"/>
<rect x="1347" y="730" width="4.5" height="4.5" fill="#8a80b0" opacity="0.7"/>
<rect x="1354" y="730" width="4.5" height="4.5" fill="#8a80b0" opacity="0.7"/>
</g>
<rect x="1114" y="752" width="250" height="140" fill="#1a0c26"/>
<rect x="1120" y="758" width="60" height="14" fill="#2a1838"/>
<rect x="1134" y="780" width="34" height="70" rx="5" fill="#2a2038" stroke="#d0b8e8" stroke-width="1.8"/>
<rect x="1138" y="786" width="26" height="55" fill="#c0a8e0" opacity="0.7"/>
<rect x="1140" y="790" width="22" height="5" fill="#f0e8f8" opacity="0.6"/>
<rect x="1140" y="799" width="22" height="5" fill="#f0e8f8" opacity="0.6"/>
<rect x="1140" y="808" width="22" height="5" fill="#f0e8f8" opacity="0.6"/>
<rect x="1140" y="817" width="22" height="5" fill="#f0e8f8" opacity="0.6"/>
<rect x="1140" y="826" width="22" height="5" fill="#f0e8f8" opacity="0.6"/>
<rect x="1140" y="835" width="22" height="5" fill="#f0e8f8" opacity="0.6"/>
<rect x="1181" y="771" width="38" height="113" fill="#d8c0f0"/>
<rect x="1181" y="776" width="38" height="3" fill="#f0a0d0" opacity="0.8"/>
<rect x="1181" y="784" width="38" height="3" fill="#f0a0d0" opacity="0.8"/>
<rect x="1181" y="792" width="38" height="3" fill="#f0a0d0" opacity="0.8"/>
<rect x="1181" y="800" width="38" height="3" fill="#f0a0d0" opacity="0.8"/>
<rect x="1181" y="808" width="38" height="3" fill="#f0a0d0" opacity="0.8"/>
<rect x="1181" y="816" width="38" height="3" fill="#f0a0d0" opacity="0.8"/>
<rect x="1181" y="824" width="38" height="3" fill="#f0a0d0" opacity="0.8"/>
<rect x="1181" y="832" width="38" height="3" fill="#f0a0d0" opacity="0.8"/>
<rect x="1181" y="840" width="38" height="3" fill="#f0a0d0" opacity="0.8"/>
<rect x="1181" y="848" width="38" height="3" fill="#f0a0d0" opacity="0.8"/>
<rect x="1181" y="856" width="38" height="3" fill="#f0a0d0" opacity="0.8"/>
<rect x="1181" y="864" width="38" height="3" fill="#f0a0d0" opacity="0.8"/>
<rect x="1181" y="872" width="38" height="3" fill="#f0a0d0" opacity="0.8"/>
<rect x="1185" y="772" width="18" height="10" fill="#f08060" opacity="0.7"/>
<rect x="1229" y="768" width="88" height="118" fill="#b8a0e8"/>
<rect x="1229" y="770" width="22" height="14" fill="#e85088"/>
<rect x="1251" y="772" width="40" height="13" fill="#f4e8f8"/>
<rect x="1233" y="790" width="40" height="10" fill="#e84888"/>
<rect x="1233" y="805" width="80" height="4" fill="#f0d8f8" opacity="0.7"/>
<rect x="1233" y="814" width="80" height="4" fill="#f0d8f8" opacity="0.7"/>
<rect x="1233" y="823" width="80" height="4" fill="#f0d8f8" opacity="0.7"/>
<rect x="1233" y="832" width="80" height="4" fill="#f0d8f8" opacity="0.7"/>
<rect x="1233" y="841" width="80" height="4" fill="#f0d8f8" opacity="0.7"/>
<rect x="1233" y="850" width="80" height="4" fill="#f0d8f8" opacity="0.7"/>
<rect x="1233" y="859" width="80" height="4" fill="#f0d8f8" opacity="0.7"/>
<rect x="1233" y="868" width="80" height="4" fill="#f0d8f8" opacity="0.7"/>
<rect x="1233" y="877" width="80" height="4" fill="#f0d8f8" opacity="0.7"/>
<rect x="1319" y="772" width="44" height="112" fill="#c0a8f0"/>
<rect x="1336" y="780" width="20" height="98" fill="#f4e8f8" opacity="0.9"/>
<rect x="1340" y="800" width="12" height="20" fill="#c83868"/>
<rect x="1340" y="835" width="12" height="20" fill="#c83868"/>
<rect x="1114" y="754" width="250" height="14" fill="#1c1028"/>
<ellipse cx="1219" cy="795.2" rx="5.6" ry="6.7" fill="#07040a"/>
<path d="M1215.9,800.2 L1222.1,800.2 L1222.4,803.6 Q1231.3,803.6 1231.9,811.4 L1232.6,850.6 L1228.9,852.8 L1226.4,901.0 L1220.8,901.0 L1219.0,856.2 L1217.2,901.0 L1211.6,901.0 L1209.1,852.8 L1205.4,850.6 L1206.1,811.4 Q1206.7,803.6 1215.6,803.6 Z" fill="#07040a"/>
<ellipse cx="1289" cy="753.3" rx="9.3" ry="11.2" fill="#050308"/>
<path d="M1283.9,761.7 L1294.1,761.7 L1294.6,767.3 Q1311.4,767.3 1312.6,780.4 L1313.7,845.9 L1307.0,849.6 L1302.5,930.0 L1292.4,930.0 L1289.0,855.2 L1285.6,930.0 L1275.5,930.0 L1271.0,849.6 L1264.3,845.9 L1265.4,780.4 Q1266.6,767.3 1283.4,767.3 Z" fill="#050308"/>
<ellipse cx="1252" cy="810.0" rx="4.5" ry="5.4" fill="#0c0814"/>
<path d="M1249.5,814.0 L1254.5,814.0 L1254.7,816.7 Q1261.9,816.7 1262.4,823.0 L1262.9,854.5 L1259.9,856.3 L1257.9,895.0 L1253.5,895.0 L1252.0,859.0 L1250.5,895.0 L1246.1,895.0 L1244.1,856.3 L1241.1,854.5 L1241.6,823.0 Q1242.1,816.7 1249.3,816.7 Z" fill="#0c0814"/>
<ellipse cx="1072" cy="780.4" rx="6.8" ry="8.1" fill="#07040a"/>
<path d="M1068.3,786.5 L1075.7,786.5 L1076.0,790.5 Q1086.8,790.5 1087.6,800.0 L1088.3,847.2 L1083.9,850.0 L1080.9,908.0 L1074.2,908.0 L1072.0,854.0 L1069.8,908.0 L1063.1,908.0 L1060.1,850.0 L1055.7,847.2 L1056.4,800.0 Q1057.2,790.5 1068.0,790.5 Z" fill="#07040a"/>
<ellipse cx="1101" cy="787.0" rx="6.4" ry="7.7" fill="#07040a"/>
<path d="M1097.5,792.8 L1104.5,792.8 L1104.8,796.6 Q1115.1,796.6 1115.8,805.6 L1116.5,850.4 L1112.3,853.0 L1109.4,908.0 L1103.1,908.0 L1101.0,856.8 L1098.9,908.0 L1092.6,908.0 L1089.7,853.0 L1085.5,850.4 L1086.2,805.6 Q1086.9,796.6 1097.2,796.6 Z" fill="#07040a"/>
<ellipse cx="1131" cy="777.7" rx="7.0" ry="8.4" fill="#07040a"/>
<path d="M1127.2,784.0 L1134.8,784.0 L1135.2,788.2 Q1146.4,788.2 1147.2,798.0 L1147.9,847.0 L1143.3,849.8 L1140.2,910.0 L1133.3,910.0 L1131.0,854.0 L1128.7,910.0 L1121.8,910.0 L1118.7,849.8 L1114.1,847.0 L1114.8,798.0 Q1115.6,788.2 1126.8,788.2 Z" fill="#07040a"/>
<rect x="1120" y="815" width="5" height="40" fill="#a08030" opacity="0.5"/>
<rect x="1145" y="815" width="5" height="40" fill="#a08030" opacity="0.5"/>
<defs><radialGradient id="gStoreFloor" cx="0.5" cy="0" r="0.9"><stop offset="0" stop-color="#3a2860" stop-opacity="0.9"/><stop offset="0.35" stop-color="#1e1230" stop-opacity="0.8"/><stop offset="1" stop-color="#0a0610" stop-opacity="0"/></radialGradient></defs>
<defs><radialGradient id="gFl1"><stop offset="0" stop-color="#34225a" stop-opacity="0.75"/><stop offset="0.5" stop-color="#24163a" stop-opacity="0.6"/><stop offset="1" stop-color="#1a1028" stop-opacity="0"/></radialGradient></defs>
<ellipse cx="1270" cy="895" rx="300" ry="120" fill="url(#gFl1)"/>
<rect x="1362" y="142" width="40" height="860" fill="#0a0710" opacity="0.85"/></svg>
<svg style="position:absolute;left:359px;top:142px" width="1664" height="934" viewBox="359 142 1664 934">
<defs>
<mask id="mTHBE" maskUnits="userSpaceOnUse" x="359" y="142" width="1664" height="934"><text x="1812.5" y="302" font-family="Liberation Sans" font-size="64" textLength="161" lengthAdjust="spacingAndGlyphs" fill="#fff" stroke="#000" stroke-width="1.4">THBE</text>
<text x="1816.2" y="346.2" font-family="Liberation Sans" font-size="31.1" textLength="155" lengthAdjust="spacingAndGlyphs" fill="#fff" stroke="#000" stroke-width="0.9">IN THE MIX</text></mask>
</defs>
<path d="M1458.10,772.00 L1458.10,871.40 M1516.80,834.30 C1516.80,853.80 1505.15,869.60 1490.77,869.60 C1476.39,869.60 1464.74,853.80 1464.74,834.30 C1464.74,814.80 1476.39,799.00 1490.77,799.00 C1505.15,799.00 1516.80,814.80 1516.80,834.30 Z M1531.73,819.03 C1534.16,802.71 1545.74,799.00 1557.90,799.00 C1577.38,799.00 1580.42,806.42 1580.42,819.03 L1580.42,865.46 C1580.42,869.60 1582.85,869.60 1588.30,869.60 M1580.42,832.39 C1573.12,837.58 1542.70,836.10 1539.66,837.58 C1529.30,840.55 1529.30,849.14 1529.30,856.56 C1529.30,867.69 1539.66,869.60 1553.04,869.60 C1570.06,869.60 1580.42,860.27 1580.42,845.43 M1646.10,816.81 C1643.91,803.45 1631.46,799.00 1621.60,799.00 C1605.16,799.00 1597.10,806.42 1597.64,818.29 C1598.74,830.16 1610.64,832.39 1621.60,836.10 C1636.94,840.55 1647.20,845.00 1647.20,853.28 C1647.20,865.15 1635.30,869.60 1621.60,869.60 C1605.16,869.60 1596.00,862.18 1596.00,847.34 M1659.80,834.30 L1718.50,834.30 C1718.50,814.88 1705.29,799.00 1689.15,799.00 C1672.94,799.00 1659.80,814.80 1659.80,834.30 C1659.80,853.80 1672.94,869.60 1689.15,869.60 C1705.29,869.60 1715.57,855.48 1718.50,847.01 M1734.00,797.92 L1734.00,871.40 M1734.00,821.26 C1738.92,804.94 1748.44,799.00 1759.26,799.00 C1777.14,799.00 1779.60,810.13 1779.60,824.97 L1779.60,871.40 M1779.60,821.26 C1784.52,804.94 1794.04,799.00 1804.86,799.00 C1822.74,799.00 1825.20,810.13 1825.20,824.97 L1825.20,871.40  M1837.80,834.30 L1896.40,834.30 C1896.40,814.88 1883.21,799.00 1867.10,799.00 C1850.92,799.00 1837.80,814.80 1837.80,834.30 C1837.80,853.80 1850.92,869.60 1867.10,869.60 C1883.21,869.60 1893.47,855.48 1896.40,847.01 M1911.30,797.92 L1911.30,871.40 M1911.30,821.26 C1916.70,804.94 1928.40,799.00 1939.20,799.00 C1959.00,799.00 1961.70,810.13 1961.70,824.97 L1961.70,871.40 M1982.38,777.30 L1982.38,862.50 C1982.38,869.60 1985.62,869.60 1992.12,869.60 L2003.50,869.60 M1971.00,799.00 L2003.50,799.00" fill="none" stroke="#ffffff" stroke-width="3.6" stroke-linecap="butt" stroke-linejoin="round"/>
<path d="M1637.32,983.10 C1635.16,969.60 1622.92,965.10 1613.20,965.10 C1597.00,965.10 1589.08,972.60 1589.62,984.60 C1590.70,996.60 1602.40,998.85 1613.20,1002.60 C1628.32,1007.10 1638.40,1011.60 1638.40,1020.00 C1638.40,1032.00 1626.70,1036.50 1613.20,1036.50 C1597.00,1036.50 1588.00,1029.00 1588.00,1014.00 M1650.90,1000.80 L1711.10,1000.80 C1711.10,981.16 1697.56,965.10 1681.00,965.10 C1664.38,965.10 1650.90,981.08 1650.90,1000.80 C1650.90,1020.52 1664.38,1036.50 1681.00,1036.50 C1697.56,1036.50 1708.09,1022.22 1711.10,1013.65 M1770.82,983.10 C1768.66,969.60 1756.42,965.10 1746.70,965.10 C1730.50,965.10 1722.58,972.60 1723.12,984.60 C1724.20,996.60 1735.90,998.85 1746.70,1002.60 C1761.82,1007.10 1771.90,1011.60 1771.90,1020.00 C1771.90,1032.00 1760.20,1036.50 1746.70,1036.50 C1730.50,1036.50 1721.50,1029.00 1721.50,1014.00 M1836.03,983.10 C1833.90,969.60 1821.81,965.10 1812.20,965.10 C1796.18,965.10 1788.37,972.60 1788.90,984.60 C1789.97,996.60 1801.52,998.85 1812.20,1002.60 C1827.15,1007.10 1837.10,1011.60 1837.10,1020.00 C1837.10,1032.00 1825.55,1036.50 1812.20,1036.50 C1796.18,1036.50 1787.30,1029.00 1787.30,1014.00 M1853.75,939.60 L1853.75,947.52 M1853.75,963.30 L1853.75,1038.30 M1929.10,1000.80 C1929.10,1020.52 1915.29,1036.50 1898.25,1036.50 C1881.21,1036.50 1867.40,1020.52 1867.40,1000.80 C1867.40,981.08 1881.21,965.10 1898.25,965.10 C1915.29,965.10 1929.10,981.08 1929.10,1000.80 Z M1944.50,964.02 L1944.50,1038.30 M1944.50,987.60 C1949.99,971.10 1961.91,965.10 1972.89,965.10 C1993.06,965.10 1995.80,976.35 1995.80,991.35 L1995.80,1038.30" fill="none" stroke="#ffffff" stroke-width="3.6" stroke-linecap="butt" stroke-linejoin="round"/>
<path d="M386.55,1017.52 L408.15,1029.40 L386.55,1041.27 M415.25,1017.52 L437.45,1029.40 L415.25,1041.27 M457.25,1009.25 L457.25,1040.75 L470.93,1040.75 C480.55,1040.75 480.55,1038.75 480.55,1032.40 C480.55,1026.06 479.06,1024.06 470.17,1024.06 L457.25,1024.06 M457.25,1009.25 L470.17,1009.25 C479.03,1009.25 479.03,1011.03 479.03,1016.65 C479.03,1022.28 477.79,1024.06 470.17,1024.06 M486.81,1024.38 C487.67,1018.81 491.35,1017.55 495.65,1017.55 C502.12,1017.55 503.20,1020.08 503.20,1024.38 L503.20,1039.78 C503.20,1040.75 504.06,1040.75 506.40,1040.75 M503.20,1028.93 C500.62,1030.71 490.27,1030.20 489.20,1030.71 C485.95,1031.72 485.95,1034.21 485.95,1036.74 C485.95,1040.53 489.20,1040.75 493.93,1040.75 C499.95,1040.75 503.20,1038.00 503.20,1032.94 M528.55,1024.51 C527.13,1019.29 523.35,1017.55 519.10,1017.55 C513.88,1017.55 509.65,1022.74 509.65,1029.15 C509.65,1035.56 513.88,1040.75 519.10,1040.75 C523.83,1040.75 527.61,1038.43 528.55,1033.56 M535.05,1008.20 L535.05,1041.80 M553.35,1016.50 L535.05,1033.70 M541.75,1027.88 L554.40,1041.80 M570.45,1008.20 L570.45,1012.82 M570.45,1016.50 L570.45,1041.80 M577.05,1016.92 L577.05,1041.80 M577.05,1025.14 C579.15,1019.57 583.35,1017.55 587.55,1017.55 C594.90,1017.55 595.95,1021.34 595.95,1026.40 L595.95,1041.80 M615.72,1024.38 C616.59,1018.81 620.34,1017.55 624.70,1017.55 C631.28,1017.55 632.37,1020.08 632.37,1024.38 L632.37,1039.78 C632.37,1040.75 633.24,1040.75 635.60,1040.75 M632.37,1028.93 C629.75,1030.71 619.25,1030.20 618.16,1030.71 C614.85,1031.72 614.85,1034.21 614.85,1036.74 C614.85,1040.53 618.16,1040.75 622.96,1040.75 C629.06,1040.75 632.37,1038.00 632.37,1032.94 M652.15,1016.92 L652.15,1041.80 M652.15,1025.14 C653.72,1019.57 656.28,1017.55 659.74,1017.55 C664.97,1017.55 665.75,1021.34 665.75,1026.40 L665.75,1041.80 M665.75,1025.14 C667.32,1019.57 669.88,1017.55 673.34,1017.55 C678.57,1017.55 679.35,1021.34 679.35,1026.40 L679.35,1041.80  M690.45,1008.80 L690.45,1013.42 M690.45,1016.50 L690.45,1041.80 M698.05,1016.92 L698.05,1041.80 M698.05,1025.14 C700.12,1019.57 704.25,1017.55 708.38,1017.55 C715.62,1017.55 716.65,1021.34 716.65,1026.40 L716.65,1041.80 M739.65,1016.50 L739.65,1041.80 M739.65,1033.16 C737.52,1038.73 733.25,1040.75 728.99,1040.75 C721.51,1040.75 720.45,1036.95 720.45,1031.89 L720.45,1016.50 M747.52,1010.50 L747.52,1038.76 C747.52,1040.75 748.67,1040.75 750.98,1040.75 L755.00,1040.75 M743.50,1017.55 L755.00,1017.55 M757.85,1029.15 L777.55,1029.15 C777.55,1022.77 773.12,1017.55 767.70,1017.55 C762.26,1017.55 757.85,1022.74 757.85,1029.15 C757.85,1035.56 762.26,1040.75 767.70,1040.75 C773.12,1040.75 776.57,1036.11 777.55,1033.33 M818.25,1017.52 L796.25,1029.40 L818.25,1041.27 M846.95,1017.52 L825.05,1029.40 L846.95,1041.27" fill="none" stroke="#e8e8e8" stroke-width="2.1" stroke-linejoin="miter"/>
<circle cx="1893" cy="272" r="130" fill="#ffffff"/>
<circle cx="1893.5" cy="272.5" r="123.2" fill="none" stroke="#6a2ea0" stroke-width="1.8"/>
<rect x="1848.4" y="203.4" width="2" height="11.9" fill="#6a2ea0"/>
<rect x="1859.2" y="195.4" width="2" height="25.6" fill="#6a2ea0"/>
<rect x="1870.3" y="189.7" width="2" height="39.9" fill="#6a2ea0"/>
<rect x="1881.7" y="179" width="2" height="60.5" fill="#6a2ea0"/>
<rect x="1892.5" y="194" width="2" height="29.9" fill="#6a2ea0"/>
<rect x="1903" y="200.5" width="2" height="17.7" fill="#6a2ea0"/>
<rect x="1913.9" y="203.4" width="2" height="11.4" fill="#6a2ea0"/>
<rect x="1925.2" y="199.7" width="2" height="19.0" fill="#6a2ea0"/>
<rect x="1936" y="204" width="2" height="10.8" fill="#6a2ea0"/>
<rect x="359" y="142" width="1664" height="934" fill="#6a2ea0" mask="url(#mTHBE)"/>
</svg>
<div style="position:absolute;left:112px;top:1088px;width:2158px;height:60px;background:#313131;"></div>
<div style="position:absolute;left:112px;top:1148px;width:2158px;height:1.5px;background:#9c9c9c;"></div>
<div style="position:absolute;left:112px;top:1149px;width:2158px;height:42px;background:linear-gradient(#333333,#6f6f6f);"></div>
<div style="position:absolute;left:112px;top:1191px;width:2158px;height:2.5px;background:#c4c4c4;"></div>
<div style="position:absolute;left:112px;top:1193.5px;width:2158px;height:1.5px;background:#0e0e0e;"></div>
<div style="position:absolute;left:112px;top:1195px;width:2158px;height:283px;background:#303030;"></div>
<div style="position:absolute;left:114px;top:1195px;width:408px;height:283px;background:#1f1f1f;"></div>
<div style="position:absolute;left:525px;top:1195px;width:406px;height:283px;background:#1f1f1f;"></div>
<div style="position:absolute;left:112px;top:1478px;width:2158px;height:56px;background:#303030;"></div>
<div style="position:absolute;left:112px;top:1478px;width:820px;height:1px;background:#4a4a4a;"></div>
<div style="position:absolute;left:112px;top:1534.5px;width:2158px;height:2px;background:#8a8a8a;"></div>
<div style="position:absolute;left:112px;top:1536.5px;width:2158px;height:54px;background:#313131;"></div>
<div style="position:absolute;left:521.5px;top:1149px;width:2px;height:386px;background:#7a7a7a;"></div>
<div style="position:absolute;left:520.0px;top:1149px;width:1.5px;height:386px;background:#1a1a1a;"></div>
<div style="position:absolute;left:931.5px;top:1149px;width:2px;height:386px;background:#7a7a7a;"></div>
<div style="position:absolute;left:930.0px;top:1149px;width:1.5px;height:386px;background:#1a1a1a;"></div>
<div style="position:absolute;left:1496px;top:1149px;width:2px;height:386px;background:#7a7a7a;"></div>
<div style="position:absolute;left:1494.5px;top:1149px;width:1.5px;height:386px;background:#1a1a1a;"></div>
<div style="position:absolute;left:1884px;top:1149px;width:2px;height:386px;background:#7a7a7a;"></div>
<div style="position:absolute;left:1882.5px;top:1149px;width:1.5px;height:386px;background:#1a1a1a;"></div>
<div style="position:absolute;left:128px;top:92px;width:24px;height:24px;border-radius:50%;background:#fe5f57"></div>
<div style="position:absolute;left:168px;top:92px;width:24px;height:24px;border-radius:50%;background:#febc2e"></div>
<div style="position:absolute;left:208px;top:92px;width:24px;height:24px;border-radius:50%;background:#28c840"></div>
<div class="t" style="position:absolute;left:777.20px;top:89.87px;font-size:26.5px;line-height:26.5px;color:#a9a9a9;font-weight:bold;white-space:nowrap;letter-spacing:0.410px;">OBS 26.0.2 (mac) - Profile: Unbenannt - Scenes: thbe in the mix</div>
<div class="t" style="position:absolute;left:123.20px;top:1105.54px;font-size:27px;line-height:27px;color:#f2f2f2;font-weight:normal;white-space:nowrap;letter-spacing:0.182px;">No source selected</div>
<div class="t" style="position:absolute;left:691.30px;top:1105.84px;font-size:27px;line-height:27px;color:#6c6c6c;font-weight:normal;white-space:nowrap;letter-spacing:0.372px;">Properties</div>
<div class="t" style="position:absolute;left:875.60px;top:1105.84px;font-size:27px;line-height:27px;color:#6c6c6c;font-weight:normal;white-space:nowrap;letter-spacing:0.067px;">Filters</div>
<div class="t" style="position:absolute;left:295.00px;top:1160.98px;font-size:22px;line-height:22px;color:#e4e4e4;font-weight:normal;white-space:nowrap;letter-spacing:0.664px;">Scenes</div>
<div class="t" style="position:absolute;left:702.00px;top:1160.98px;font-size:22px;line-height:22px;color:#e4e4e4;font-weight:normal;white-space:nowrap;letter-spacing:0.616px;">Sources</div>
<div class="t" style="position:absolute;left:1170.50px;top:1160.98px;font-size:22px;line-height:22px;color:#e4e4e4;font-weight:normal;white-space:nowrap;letter-spacing:0.637px;">Audio Mixer</div>
<div class="t" style="position:absolute;left:1613.50px;top:1160.98px;font-size:22px;line-height:22px;color:#e4e4e4;font-weight:normal;white-space:nowrap;letter-spacing:0.764px;">Scene Transitions</div>
<div class="t" style="position:absolute;left:2050.00px;top:1160.98px;font-size:22px;line-height:22px;color:#e4e4e4;font-weight:normal;white-space:nowrap;letter-spacing:0.797px;">Controls</div>
<div style="position:absolute;left:114px;top:1298px;width:408px;height:34px;background:#505050;"></div>
<div class="t" style="position:absolute;left:123.80px;top:1199.59px;font-size:26px;line-height:26px;color:#f4f4f4;font-weight:normal;white-space:nowrap;letter-spacing:-0.137px;">Stream Start</div>
<div class="t" style="position:absolute;left:123.80px;top:1233.59px;font-size:26px;line-height:26px;color:#f4f4f4;font-weight:normal;white-space:nowrap;letter-spacing:-0.993px;">Stream Feed 1</div>
<div class="t" style="position:absolute;left:123.80px;top:1267.59px;font-size:26px;line-height:26px;color:#f4f4f4;font-weight:normal;white-space:nowrap;letter-spacing:-0.701px;">Stream Feed 2</div>
<div class="t" style="position:absolute;left:123.80px;top:1301.59px;font-size:26px;line-height:26px;color:#f4f4f4;font-weight:normal;white-space:nowrap;letter-spacing:-0.659px;">Stream Feed 3</div>
<div class="t" style="position:absolute;left:123.80px;top:1335.59px;font-size:26px;line-height:26px;color:#f4f4f4;font-weight:normal;white-space:nowrap;letter-spacing:-0.592px;">Stream End</div>
<div style="position:absolute;left:525px;top:1196px;width:406px;height:34px;background:#2e6b6e;"></div>
<div style="position:absolute;left:525px;top:1230px;width:406px;height:34px;background:#6c2a6c;"></div>
<div style="position:absolute;left:525px;top:1264px;width:406px;height:34px;background:#6c2a6c;"></div>
<div style="position:absolute;left:525px;top:1298px;width:406px;height:34px;background:#6d6d6d;"></div>
<div class="t" style="position:absolute;left:585.40px;top:1200.29px;font-size:26px;line-height:26px;color:#f6f6f6;font-weight:normal;white-space:nowrap;letter-spacing:-0.181px;">THBE Logo</div>
<div class="t" style="position:absolute;left:583.40px;top:1234.29px;font-size:26px;line-height:26px;color:#f6f6f6;font-weight:normal;white-space:nowrap;letter-spacing:0.390px;">Back in a minute</div>
<div class="t" style="position:absolute;left:583.40px;top:1268.29px;font-size:26px;line-height:26px;color:#f6f6f6;font-weight:normal;white-space:nowrap;letter-spacing:0.424px;">Basement Sessio</div>
<div class="t" style="position:absolute;left:583.40px;top:1302.29px;font-size:26px;line-height:26px;color:#f6f6f6;font-weight:normal;white-space:nowrap;letter-spacing:1.328px;">DDJ-400</div>
<div class="t" style="position:absolute;left:942.80px;top:1206.23px;font-size:25.6px;line-height:25.6px;color:#f0f0f0;font-weight:normal;white-space:nowrap;letter-spacing:0.408px;">DDJ-400</div>
<div class="t" style="position:absolute;left:1379.40px;top:1206.23px;font-size:25.6px;line-height:25.6px;color:#f0f0f0;font-weight:normal;white-space:nowrap;letter-spacing:0.475px;">0.0 dB</div>
<div class="t" style="position:absolute;left:1533.00px;top:1219.09px;font-size:26px;line-height:26px;color:#e8e8e8;font-weight:normal;white-space:nowrap;letter-spacing:0.399px;">Fade</div>
<div class="t" style="position:absolute;left:1504.90px;top:1277.07px;font-size:26.5px;line-height:26.5px;color:#f0f0f0;font-weight:normal;white-space:nowrap;letter-spacing:0.925px;">Duration</div>
<div class="t" style="position:absolute;left:1625.50px;top:1277.07px;font-size:26.5px;line-height:26.5px;color:#f0f0f0;font-weight:normal;white-space:nowrap;letter-spacing:0.285px;">1000 ms</div>
<div style="position:absolute;left:1900px;top:1204px;width:356px;height:40px;border-radius:9px;background:#676767;box-shadow:0 1.5px 0 #242424"></div>
<div class="t" style="position:absolute;left:1981.00px;top:1209.17px;font-size:26.5px;line-height:26.5px;color:#ececec;font-weight:normal;white-space:nowrap;letter-spacing:0.653px;">Start Streaming</div>
<div style="position:absolute;left:1912px;top:1256px;width:332px;height:40px;border-radius:9px;background:#676767;box-shadow:0 1.5px 0 #242424"></div>
<div class="t" style="position:absolute;left:1982.20px;top:1261.57px;font-size:26.5px;line-height:26.5px;color:#ececec;font-weight:normal;white-space:nowrap;letter-spacing:0.494px;">Start Recording</div>
<div style="position:absolute;left:1900px;top:1320px;width:356px;height:40px;border-radius:9px;background:#676767;box-shadow:0 1.5px 0 #242424"></div>
<div class="t" style="position:absolute;left:2000.70px;top:1324.97px;font-size:26.5px;line-height:26.5px;color:#ececec;font-weight:normal;white-space:nowrap;letter-spacing:0.565px;">Studio Mode</div>
<div style="position:absolute;left:1900px;top:1368px;width:356px;height:40px;border-radius:9px;background:#676767;box-shadow:0 1.5px 0 #242424"></div>
<div class="t" style="position:absolute;left:2027.90px;top:1373.17px;font-size:26.5px;line-height:26.5px;color:#ececec;font-weight:normal;white-space:nowrap;letter-spacing:0.485px;">Settings</div>
<div style="position:absolute;left:1900px;top:1416px;width:356px;height:40px;border-radius:9px;background:#676767;box-shadow:0 1.5px 0 #242424"></div>
<div class="t" style="position:absolute;left:2054.60px;top:1421.07px;font-size:26.5px;line-height:26.5px;color:#ececec;font-weight:normal;white-space:nowrap;letter-spacing:-0.204px;">Exit</div>
<div class="t" style="position:absolute;left:1374.90px;top:1551.57px;font-size:26.5px;line-height:26.5px;color:#f0f0f0;font-weight:normal;white-space:nowrap;letter-spacing:0.685px;">LIVE: 00:00:00</div>
<div class="t" style="position:absolute;left:1624.90px;top:1551.57px;font-size:26.5px;line-height:26.5px;color:#f0f0f0;font-weight:normal;white-space:nowrap;letter-spacing:0.584px;">REC: 00:00:00</div>
<div class="t" style="position:absolute;left:1859.60px;top:1551.57px;font-size:26.5px;line-height:26.5px;color:#f0f0f0;font-weight:normal;white-space:nowrap;letter-spacing:0.432px;">CPU: 7.9%,23.98 fps</div>
<svg style="position:absolute;left:0;top:0" width="2382" height="1738" viewBox="0 0 2382 1738"><circle cx="130" cy="1171" r="12" fill="#000" opacity="0.18" filter="url(#ib2)"/><rect x="127" y="1165" width="10.5" height="9" fill="none" stroke="#e8e8e8" stroke-width="1.8"/><rect x="122.9" y="1169.2" width="11" height="9" fill="#5a5a5a" stroke="#ffffff" stroke-width="2"/><circle cx="542" cy="1171" r="12" fill="#000" opacity="0.18" filter="url(#ib2)"/><rect x="539" y="1165" width="10.5" height="9" fill="none" stroke="#e8e8e8" stroke-width="1.8"/><rect x="534.9" y="1169.2" width="11" height="9" fill="#5a5a5a" stroke="#ffffff" stroke-width="2"/><circle cx="952" cy="1171" r="12" fill="#000" opacity="0.18" filter="url(#ib2)"/><rect x="949" y="1165" width="10.5" height="9" fill="none" stroke="#e8e8e8" stroke-width="1.8"/><rect x="944.9" y="1169.2" width="11" height="9" fill="#5a5a5a" stroke="#ffffff" stroke-width="2"/><circle cx="1516" cy="1171" r="12" fill="#000" opacity="0.18" filter="url(#ib2)"/><rect x="1513" y="1165" width="10.5" height="9" fill="none" stroke="#e8e8e8" stroke-width="1.8"/><rect x="1508.9" y="1169.2" width="11" height="9" fill="#5a5a5a" stroke="#ffffff" stroke-width="2"/><circle cx="1904" cy="1171" r="12" fill="#000" opacity="0.18" filter="url(#ib2)"/><rect x="1901" y="1165" width="10.5" height="9" fill="none" stroke="#e8e8e8" stroke-width="1.8"/><rect x="1896.9" y="1169.2" width="11" height="9" fill="#5a5a5a" stroke="#ffffff" stroke-width="2"/><rect x="633.75" y="1096" width="1.5" height="43" fill="#c8c8c8"/><rect x="634.5" y="1096" width="2.5" height="1.5" fill="#c8c8c8"/><rect x="963.75" y="1096" width="1.5" height="43" fill="#c8c8c8"/><rect x="964.5" y="1096" width="2.5" height="1.5" fill="#c8c8c8"/><path d="M664.64,1106.36 L664.79,1102.24 L670.21,1102.24 L670.36,1106.36 L673.35,1107.60 L676.37,1104.79 L680.21,1108.63 L677.40,1111.65 L678.64,1114.64 L682.76,1114.79 L682.76,1120.21 L678.64,1120.36 L677.40,1123.35 L680.21,1126.37 L676.37,1130.21 L673.35,1127.40 L670.36,1128.64 L670.21,1132.76 L664.79,1132.76 L664.64,1128.64 L661.65,1127.40 L658.63,1130.21 L654.79,1126.37 L657.60,1123.35 L656.36,1120.36 L652.24,1120.21 L652.24,1114.79 L656.36,1114.64 L657.60,1111.65 L654.79,1108.63 L658.63,1104.79 L661.65,1107.60 Z M673.80,1117.50 A6.3,6.3 0 1,0 661.20,1117.50 A6.3,6.3 0 1,0 673.80,1117.50 Z" fill="#1b1b1b" fill-rule="evenodd"/><defs><clipPath id="fclip"><circle cx="847.5" cy="1113" r="11"/></clipPath><clipPath id="fclip2"><circle cx="855" cy="1120" r="10.5"/></clipPath></defs><circle cx="847.5" cy="1113" r="11" fill="#1b1b1b"/><g clip-path="url(#fclip)"><g clip-path="url(#fclip2)"><rect x="830" y="1100" width="40" height="40" fill="#313131"/><g transform="translate(847.5 1113) rotate(-34)"><rect x="-8.799999999999999" y="-20" width="2.4" height="40" fill="#1b1b1b"/><rect x="-4.2" y="-20" width="2.4" height="40" fill="#1b1b1b"/><rect x="0.6000000000000001" y="-20" width="2.4" height="40" fill="#1b1b1b"/><rect x="5.3999999999999995" y="-20" width="2.4" height="40" fill="#1b1b1b"/></g></g></g><circle cx="861.9" cy="1111.9" r="1.6" fill="#1b1b1b"/><circle cx="864.9" cy="1116.6" r="1.6" fill="#1b1b1b"/><circle cx="866" cy="1121.4" r="1.6" fill="#1b1b1b"/><circle cx="864.3" cy="1126.9" r="1.6" fill="#1b1b1b"/><circle cx="860.5" cy="1130.1" r="1.6" fill="#1b1b1b"/><circle cx="855.3" cy="1131.8" r="1.6" fill="#1b1b1b"/><circle cx="849.9" cy="1131" r="1.6" fill="#1b1b1b"/><circle cx="845.8" cy="1127.7" r="1.6" fill="#1b1b1b"/><rect x="532" y="1196.5" width="32" height="33" fill="#050505"/><path d="M536,1200.5 L560,1200.5 L560,1208.5 L553,1208.5 L553,1213.5 L561,1221.5 L558,1224.5 L536,1208.5 Z" fill="#2f6e70"/><rect x="532" y="1263" width="32" height="33" fill="#050505"/><path d="M536,1267 L560,1267 L560,1275 L553,1275 L553,1280 L561,1288 L558,1291 L536,1275 Z" fill="#6c2c6c"/><path d="M532,1230 L564,1230 L564,1237.5 L562,1237.5 L560,1235 L551.5,1235 L551.5,1258.5 L555.5,1258.5 L555.5,1262 L540.5,1262 L540.5,1258.5 L544.5,1258.5 L544.5,1235 L536,1235 L534,1237.5 L532,1237.5 Z" fill="#050505"/><rect x="543.6" y="1298.5" width="8.6" height="15.5" rx="4.3" fill="#050505"/><path d="M538.5,1306.5 Q538.5,1320 548,1320 Q557.5,1320 557.5,1306.5" fill="none" stroke="#050505" stroke-width="3.3" stroke-linecap="round"/><rect x="546.6" y="1319.5" width="2.8" height="7" fill="#050505"/><path d="M540.3,1329.6 Q540.5,1326 548,1326 Q555.5,1326 555.7,1329.6 Z" fill="#050505"/><path d="M811.5,1212 C818,1198.5 838,1198.5 844.5,1212 C838,1225.5 818,1225.5 811.5,1212 Z" fill="#050505"/><circle cx="828" cy="1212" r="6.6" fill="none" stroke="#2f6e70" stroke-width="2.6"/><g opacity="1"><rect x="870" y="1210" width="24" height="16" fill="#8e8e8e"/><path d="M876,1204.5 A6.8,6.8 0 0 1 889.6,1206.5 L889.6,1210" fill="none" stroke="#8e8e8e" stroke-width="4.2"/></g><path d="M811.5,1246 C818,1232.5 838,1232.5 844.5,1246 C838,1259.5 818,1259.5 811.5,1246 Z" fill="#050505"/><circle cx="828" cy="1246" r="6.6" fill="none" stroke="#6c2c6c" stroke-width="2.6"/><g opacity="1"><rect x="870" y="1244" width="24" height="16" fill="#8e8e8e"/><path d="M876,1238.5 A6.8,6.8 0 0 1 889.6,1240.5 L889.6,1244" fill="none" stroke="#8e8e8e" stroke-width="4.2"/></g><path d="M811.5,1280 C818,1266.5 838,1266.5 844.5,1280 C838,1293.5 818,1293.5 811.5,1280 Z" fill="#050505"/><circle cx="828" cy="1280" r="6.6" fill="none" stroke="#6c2c6c" stroke-width="2.6"/><g opacity="1"><rect x="870" y="1278" width="24" height="16" fill="#8e8e8e"/><path d="M876,1272.5 A6.8,6.8 0 0 1 889.6,1274.5 L889.6,1278" fill="none" stroke="#8e8e8e" stroke-width="4.2"/></g><path d="M811.5,1314 C818,1300.5 838,1300.5 844.5,1314 C838,1327.5 818,1327.5 811.5,1314 Z" fill="#050505"/><circle cx="828" cy="1314" r="6.6" fill="none" stroke="#6d6d6d" stroke-width="2.6"/><g opacity="0.55"><rect x="870" y="1312" width="24" height="16" fill="#8e8e8e"/><path d="M876,1306.5 A6.8,6.8 0 0 1 889.6,1308.5 L889.6,1312" fill="none" stroke="#8e8e8e" stroke-width="4.2"/></g><path d="M127,1506 H157 M142,1491 V1521" stroke="#050505" stroke-width="3.2" stroke-linecap="round" fill="none"/><path d="M187,1506 H217" stroke="#050505" stroke-width="3.2" stroke-linecap="round"/><rect x="240.0" y="1482" width="1.6" height="1.6" fill="#bdbdbd"/><rect x="240.0" y="1486.4" width="1.6" height="1.6" fill="#bdbdbd"/><rect x="240.0" y="1490.8000000000002" width="1.6" height="1.6" fill="#bdbdbd"/><rect x="240.0" y="1495.2000000000003" width="1.6" height="1.6" fill="#bdbdbd"/><rect x="240.0" y="1499.6000000000004" width="1.6" height="1.6" fill="#bdbdbd"/><rect x="240.0" y="1504.0000000000005" width="1.6" height="1.6" fill="#bdbdbd"/><rect x="240.0" y="1508.4000000000005" width="1.6" height="1.6" fill="#bdbdbd"/><rect x="240.0" y="1512.8000000000006" width="1.6" height="1.6" fill="#bdbdbd"/><rect x="240.0" y="1517.2000000000007" width="1.6" height="1.6" fill="#bdbdbd"/><rect x="240.0" y="1521.6000000000008" width="1.6" height="1.6" fill="#bdbdbd"/><path d="M267.7,1513.2 L281.5,1498.8 L295.3,1513.2" stroke="#050505" stroke-width="4.6" stroke-linecap="round" stroke-linejoin="miter" fill="none"/><path d="M327.7,1498.8 L341.5,1513.2 L355.3,1498.8" stroke="#050505" stroke-width="4.6" stroke-linecap="round" stroke-linejoin="miter" fill="none"/><path d="M539,1506 H569 M554,1491 V1521" stroke="#050505" stroke-width="3.2" stroke-linecap="round" fill="none"/><path d="M599,1506 H629" stroke="#050505" stroke-width="3.2" stroke-linecap="round"/><path d="M671.02,1494.08 L671.20,1489.95 L676.80,1489.95 L676.98,1494.08 L680.11,1495.37 L683.16,1492.58 L687.12,1496.54 L684.33,1499.59 L685.62,1502.72 L689.75,1502.90 L689.75,1508.50 L685.62,1508.68 L684.33,1511.81 L687.12,1514.86 L683.16,1518.82 L680.11,1516.03 L676.98,1517.32 L676.80,1521.45 L671.20,1521.45 L671.02,1517.32 L667.89,1516.03 L664.84,1518.82 L660.88,1514.86 L663.67,1511.81 L662.38,1508.68 L658.25,1508.50 L658.25,1502.90 L662.38,1502.72 L663.67,1499.59 L660.88,1496.54 L664.84,1492.58 L667.89,1495.37 Z M680.60,1505.70 A6.6,6.6 0 1,0 667.40,1505.70 A6.6,6.6 0 1,0 680.60,1505.70 Z" fill="#050505" fill-rule="evenodd"/><rect x="711.9000000000001" y="1482" width="1.6" height="1.6" fill="#bdbdbd"/><rect x="711.9000000000001" y="1486.4" width="1.6" height="1.6" fill="#bdbdbd"/><rect x="711.9000000000001" y="1490.8000000000002" width="1.6" height="1.6" fill="#bdbdbd"/><rect x="711.9000000000001" y="1495.2000000000003" width="1.6" height="1.6" fill="#bdbdbd"/><rect x="711.9000000000001" y="1499.6000000000004" width="1.6" height="1.6" fill="#bdbdbd"/><rect x="711.9000000000001" y="1504.0000000000005" width="1.6" height="1.6" fill="#bdbdbd"/><rect x="711.9000000000001" y="1508.4000000000005" width="1.6" height="1.6" fill="#bdbdbd"/><rect x="711.9000000000001" y="1512.8000000000006" width="1.6" height="1.6" fill="#bdbdbd"/><rect x="711.9000000000001" y="1517.2000000000007" width="1.6" height="1.6" fill="#bdbdbd"/><rect x="711.9000000000001" y="1521.6000000000008" width="1.6" height="1.6" fill="#bdbdbd"/><path d="M740.2,1513.2 L754,1498.8 L767.8,1513.2" stroke="#050505" stroke-width="4.6" stroke-linecap="round" stroke-linejoin="miter" fill="none"/><path d="M800.2,1498.8 L814,1513.2 L827.8,1498.8" stroke="#050505" stroke-width="4.6" stroke-linecap="round" stroke-linejoin="miter" fill="none"/><rect x="943.8" y="1238" width="5.8" height="6" fill="#176a17"/><rect x="943.8" y="1246.3" width="5.8" height="5.4" fill="#176a17"/><rect x="954" y="1238" width="334" height="6.1" fill="#176a17"/><rect x="1288" y="1238" width="93" height="6.1" fill="#6b6a1a"/><rect x="1381" y="1238" width="77" height="6.1" fill="#6a1414"/><rect x="954" y="1246.3" width="334" height="5.4" fill="#176a17"/><rect x="1288" y="1246.3" width="93" height="5.4" fill="#6b6a1a"/><rect x="1381" y="1246.3" width="77" height="5.4" fill="#6a1414"/><rect x="952.1" y="1252" width="2" height="5.5" fill="#0a0a0a"/><text x="951.1" y="1269.5" font-family="Liberation Sans" font-size="15" font-weight="bold" text-anchor="middle" fill="#141414" textLength="24.9" lengthAdjust="spacingAndGlyphs">-60</text><rect x="994.0600000000001" y="1252" width="2" height="5.5" fill="#0a0a0a"/><text x="993.0600000000001" y="1269.5" font-family="Liberation Sans" font-size="15" font-weight="bold" text-anchor="middle" fill="#141414" textLength="24.9" lengthAdjust="spacingAndGlyphs">-55</text><rect x="1036.02" y="1252" width="2" height="5.5" fill="#0a0a0a"/><text x="1035.02" y="1269.5" font-family="Liberation Sans" font-size="15" font-weight="bold" text-anchor="middle" fill="#141414" textLength="24.9" lengthAdjust="spacingAndGlyphs">-50</text><rect x="1077.98" y="1252" width="2" height="5.5" fill="#0a0a0a"/><text x="1076.98" y="1269.5" font-family="Liberation Sans" font-size="15" font-weight="bold" text-anchor="middle" fill="#141414" textLength="24.9" lengthAdjust="spacingAndGlyphs">-45</text><rect x="1119.94" y="1252" width="2" height="5.5" fill="#0a0a0a"/><text x="1118.94" y="1269.5" font-family="Liberation Sans" font-size="15" font-weight="bold" text-anchor="middle" fill="#141414" textLength="24.9" lengthAdjust="spacingAndGlyphs">-40</text><rect x="1161.9" y="1252" width="2" height="5.5" fill="#0a0a0a"/><text x="1160.9" y="1269.5" font-family="Liberation Sans" font-size="15" font-weight="bold" text-anchor="middle" fill="#141414" textLength="24.9" lengthAdjust="spacingAndGlyphs">-35</text><rect x="1203.8600000000001" y="1252" width="2" height="5.5" fill="#0a0a0a"/><text x="1202.8600000000001" y="1269.5" font-family="Liberation Sans" font-size="15" font-weight="bold" text-anchor="middle" fill="#141414" textLength="24.9" lengthAdjust="spacingAndGlyphs">-30</text><rect x="1245.8200000000002" y="1252" width="2" height="5.5" fill="#0a0a0a"/><text x="1244.8200000000002" y="1269.5" font-family="Liberation Sans" font-size="15" font-weight="bold" text-anchor="middle" fill="#141414" textLength="24.9" lengthAdjust="spacingAndGlyphs">-25</text><rect x="1287.78" y="1252" width="2" height="5.5" fill="#0a0a0a"/><text x="1286.78" y="1269.5" font-family="Liberation Sans" font-size="15" font-weight="bold" text-anchor="middle" fill="#141414" textLength="24.9" lengthAdjust="spacingAndGlyphs">-20</text><rect x="1329.74" y="1252" width="2" height="5.5" fill="#0a0a0a"/><text x="1328.74" y="1269.5" font-family="Liberation Sans" font-size="15" font-weight="bold" text-anchor="middle" fill="#141414" textLength="24.9" lengthAdjust="spacingAndGlyphs">-15</text><rect x="1371.7" y="1252" width="2" height="5.5" fill="#0a0a0a"/><text x="1370.7" y="1269.5" font-family="Liberation Sans" font-size="15" font-weight="bold" text-anchor="middle" fill="#141414" textLength="24.9" lengthAdjust="spacingAndGlyphs">-10</text><rect x="1413.66" y="1252" width="2" height="5.5" fill="#0a0a0a"/><text x="1412.66" y="1269.5" font-family="Liberation Sans" font-size="15" font-weight="bold" text-anchor="middle" fill="#141414" textLength="16.6" lengthAdjust="spacingAndGlyphs">-5</text><rect x="1455.62" y="1252" width="2" height="5.5" fill="#0a0a0a"/><text x="1454.62" y="1269.5" font-family="Liberation Sans" font-size="15" font-weight="bold" text-anchor="middle" fill="#141414" textLength="8.3" lengthAdjust="spacingAndGlyphs">0</text><rect x="950" y="1294.3" width="384" height="7.6" rx="3.8" fill="#1a3f80"/><rect x="951" y="1295.3" width="382" height="5.6" rx="2.8" fill="#2f7ae8"/><circle cx="1333" cy="1298" r="15.2" fill="#d2d2d2"/><path d="M1362.5,1290.5 L1375,1290.5 L1383.5,1282 L1383.5,1313.5 L1375,1305.5 L1362.5,1305.5 Z" fill="#050505" stroke="#050505" stroke-width="1" stroke-linejoin="round"/><path d="M1391,1291 Q1398,1297.8 1391,1304.6" fill="none" stroke="#050505" stroke-width="3.8" stroke-linecap="round"/><path d="M1398,1284.5 Q1410,1297.8 1398,1311.2" fill="none" stroke="#050505" stroke-width="3.8" stroke-linecap="round"/><path d="M1432.72,1286.38 L1432.93,1282.44 L1438.47,1282.44 L1438.68,1286.38 L1441.81,1287.67 L1444.74,1285.04 L1448.66,1288.96 L1446.03,1291.89 L1447.32,1295.02 L1451.26,1295.23 L1451.26,1300.77 L1447.32,1300.98 L1446.03,1304.11 L1448.66,1307.04 L1444.74,1310.96 L1441.81,1308.33 L1438.68,1309.62 L1438.47,1313.56 L1432.93,1313.56 L1432.72,1309.62 L1429.59,1308.33 L1426.66,1310.96 L1422.74,1307.04 L1425.37,1304.11 L1424.08,1300.98 L1420.14,1300.77 L1420.14,1295.23 L1424.08,1295.02 L1425.37,1291.89 L1422.74,1288.96 L1426.66,1285.04 L1429.59,1287.67 Z M1442.50,1298.00 A6.8,6.8 0 1,0 1428.90,1298.00 A6.8,6.8 0 1,0 1442.50,1298.00 Z" fill="#050505" fill-rule="evenodd"/><rect x="1464" y="1195" width="31" height="339" fill="#2c2c2c"/><rect x="1464" y="1195" width="1" height="339" fill="#262626"/><rect x="1472.3" y="1201.5" width="15.5" height="326" rx="7.75" fill="#686868"/><rect x="1518" y="1211" width="298" height="40" rx="10" fill="#6a6a6a"/><rect x="1518" y="1250" width="298" height="1.5" rx="1" fill="#2a2a2a" opacity="0.6"/><defs><linearGradient id="gBlue" x1="0" y1="0" x2="0" y2="1"><stop offset="0" stop-color="#2b78ee"/><stop offset="1" stop-color="#1a62d6"/></linearGradient><filter id="ib2" x="-50%" y="-50%" width="200%" height="200%"><feGaussianBlur stdDeviation="2.5"/></filter></defs><rect x="1780" y="1215" width="32" height="32.3" rx="7" fill="url(#gBlue)"/><path d="M1789.5,1228.3 L1796.3,1220.3 L1803.1,1228.3" stroke="#ffffff" stroke-width="2.8" stroke-linecap="round" stroke-linejoin="miter" fill="none"/><path d="M1789.5,1233.6 L1796.3,1241.6 L1803.1,1233.6" stroke="#ffffff" stroke-width="2.8" stroke-linecap="round" stroke-linejoin="miter" fill="none"/><path d="M1854.02,1220.37 L1854.83,1215.24 L1857.17,1215.24 L1857.98,1220.37 L1862.61,1222.29 L1866.81,1219.24 L1868.46,1220.89 L1865.41,1225.09 L1867.33,1229.72 L1872.46,1230.53 L1872.46,1232.87 L1867.33,1233.68 L1865.41,1238.31 L1868.46,1242.51 L1866.81,1244.16 L1862.61,1241.11 L1857.98,1243.03 L1857.17,1248.16 L1854.83,1248.16 L1854.02,1243.03 L1849.39,1241.11 L1845.19,1244.16 L1843.54,1242.51 L1846.59,1238.31 L1844.67,1233.68 L1839.54,1232.87 L1839.54,1230.53 L1844.67,1229.72 L1846.59,1225.09 L1843.54,1220.89 L1845.19,1219.24 L1849.39,1222.29 Z M1862.80,1231.70 A6.8,6.8 0 1,0 1849.20,1231.70 A6.8,6.8 0 1,0 1862.80,1231.70 Z" fill="#1b1b1b" fill-rule="evenodd"/><rect x="1624.3" y="1274.5" width="220" height="31" fill="#262626"/><rect x="1624.3" y="1274.5" width="220" height="1" fill="#3c3c3c"/><rect x="1624.3" y="1304.5" width="220" height="1" fill="#3c3c3c"/><rect x="1849.2" y="1270" width="25.3" height="39.5" rx="10" fill="#686868"/><rect x="1849.2" y="1289.4" width="25.3" height="1.2" fill="#555"/><path d="M1855.2,1283.7 L1862,1275.3 L1868.8,1283.7" stroke="#ffffff" stroke-width="2.8" stroke-linecap="round" stroke-linejoin="miter" fill="none"/><path d="M1855.2,1296.1 L1862,1304.5 L1868.8,1296.1" stroke="#ffffff" stroke-width="2.8" stroke-linecap="round" stroke-linejoin="miter" fill="none"/><circle cx="1344" cy="1564" r="6" fill="#8a8a8a"/><path d="M1336,1555 Q1331,1564 1336,1573 M1352,1555 Q1357,1564 1352,1573" fill="none" stroke="#8a8a8a" stroke-width="2.6" stroke-linecap="round"/><path d="M1329.5,1551.5 Q1321.5,1564 1329.5,1576.5 M1358.5,1551.5 Q1366.5,1564 1358.5,1576.5" fill="none" stroke="#8a8a8a" stroke-width="2.6" stroke-linecap="round"/><circle cx="1594" cy="1564" r="10" fill="#8a8a8a"/></svg>
</div>
<div style="position:absolute;left:111.5px;top:75.5px;width:2157px;height:1513px;border:1.5px solid #6e6e6e;border-radius:21px;pointer-events:none"></div>
</body></html>
